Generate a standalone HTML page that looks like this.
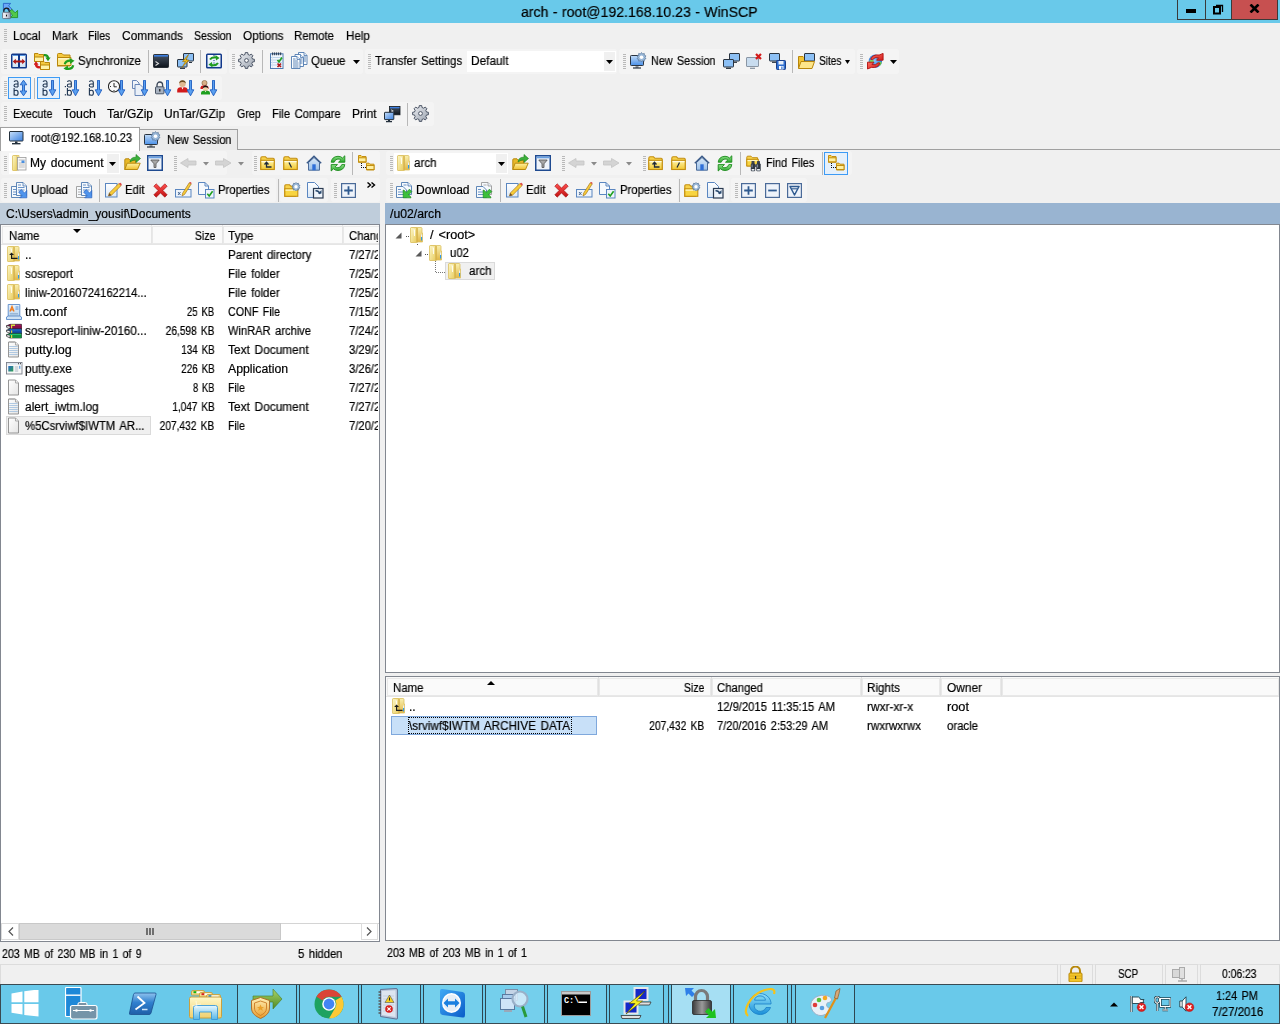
<!DOCTYPE html><html><head><meta charset="utf-8"><style>
html,body{margin:0;padding:0;width:1280px;height:1024px;overflow:hidden;background:#f0f0f0;position:relative}
.a{position:absolute;display:block}
.t{will-change:transform;-webkit-text-stroke:0.2px #000;position:absolute;white-space:pre;font-family:"Liberation Sans",sans-serif;color:#000}
</style></head><body>
<div class="a" style="left:0px;top:0px;width:1280px;height:23px;background:#69c9ea;"></div>
<svg class="a" style="left:0px;top:0px;" width="24" height="23" viewBox="0 0 24 23"><defs><linearGradient id="apg" x1="0" y1="0" x2="1" y2="0"><stop offset="0" stop-color="#ffffff"/><stop offset="0.6" stop-color="#c8ccd8"/><stop offset="1" stop-color="#8a90a8"/></linearGradient></defs><path d="M3.4 3.4H10.6L8.6 5.8L12.2 9.4L9.8 11.8L6.2 8.2L3.4 10.8Z" fill="#6aa8f8" stroke="#1f5ac0" stroke-width="0.8" stroke-linejoin="round"/><path d="M17.6 17.6H10.4L12.6 15.2L9.2 11.8L11.8 9.4L15.2 12.8L17.6 10.4Z" fill="#52c84a" stroke="#1a8a1a" stroke-width="0.8" stroke-linejoin="round"/><path d="M3.8 12.2V11A2.7 2.9 0 0 1 9.2 11V12.2" fill="none" stroke="#1a1a1a" stroke-width="1.2"/><rect x="2.6" y="12.3" width="8" height="6.3" rx="0.8" fill="url(#apg)" stroke="#5a5f70" stroke-width="0.8"/><rect x="6" y="14.6" width="1" height="2" rx="0.5" fill="#111"/></svg>
<div class="t" style="left:521.40px;top:4.00px;transform-origin:0 0;font-size:15px;line-height:15px;transform:scaleX(0.9407);word-spacing:0.50px;">arch - root@192.168.10.23 - WinSCP</div>
<div class="a" style="left:1177px;top:0px;width:29px;height:20px;background:#69c9ea;box-sizing:border-box;border:1px solid #3a3a3a;border-top:none;"></div>
<div class="a" style="left:1205px;top:0px;width:27px;height:20px;background:#69c9ea;box-sizing:border-box;border:1px solid #3a3a3a;border-top:none;"></div>
<div class="a" style="left:1231px;top:0px;width:47px;height:20px;background:#c75050;box-sizing:border-box;border:1px solid #3a3a3a;border-top:none;"></div>
<div class="a" style="left:1186px;top:9px;width:10px;height:4px;background:#000;"></div>
<svg class="a" style="left:1212px;top:3px;" width="12" height="12" viewBox="0 0 12 12"><rect x="2" y="4" width="6" height="6.5" fill="none" stroke="#000" stroke-width="2"/><path d="M4 2.5H10.5V9" fill="none" stroke="#000" stroke-width="1.3"/></svg>
<svg class="a" style="left:1249px;top:4px;" width="11" height="9" viewBox="0 0 11 9"><path d="M1.5 0.5L9.5 8.5M9.5 0.5L1.5 8.5" stroke="#000" stroke-width="2.6"/></svg>
<div class="a" style="left:4px;top:29px;width:3px;height:14px;background:repeating-linear-gradient(#b9b9b9 0 1px,transparent 1px 2px)"></div>
<div class="t" style="left:13.30px;top:30.00px;transform-origin:0 0;font-size:12px;line-height:12px;transform:scaleX(0.9658);">Local</div>
<div class="t" style="left:51.60px;top:30.00px;transform-origin:0 0;font-size:12px;line-height:12px;transform:scaleX(0.9625);">Mark</div>
<div class="t" style="left:88.30px;top:30.00px;transform-origin:0 0;font-size:12px;line-height:12px;transform:scaleX(0.8807);">Files</div>
<div class="t" style="left:121.60px;top:30.00px;transform-origin:0 0;font-size:12px;line-height:12px;transform:scaleX(0.9938);">Commands</div>
<div class="t" style="left:193.75px;top:30.00px;transform-origin:0 0;font-size:12px;line-height:12px;transform:scaleX(0.8778);">Session</div>
<div class="t" style="left:242.80px;top:30.00px;transform-origin:0 0;font-size:12px;line-height:12px;transform:scaleX(0.9821);">Options</div>
<div class="t" style="left:294.40px;top:30.00px;transform-origin:0 0;font-size:12px;line-height:12px;transform:scaleX(0.9524);">Remote</div>
<div class="t" style="left:345.60px;top:30.00px;transform-origin:0 0;font-size:12px;line-height:12px;transform:scaleX(0.9651);">Help</div>
<div class="a" style="left:1px;top:49px;width:226px;height:25px;background:#f4f4f4;border-radius:3px;"></div>
<div class="a" style="left:229px;top:49px;width:134px;height:25px;background:#f4f4f4;border-radius:3px;"></div>
<div class="a" style="left:365px;top:49px;width:252px;height:25px;background:#f4f4f4;border-radius:3px;"></div>
<div class="a" style="left:619px;top:49px;width:236px;height:25px;background:#f4f4f4;border-radius:3px;"></div>
<div class="a" style="left:857px;top:49px;width:42px;height:25px;background:#f4f4f4;border-radius:3px;"></div>
<div class="a" style="left:1px;top:76px;width:221px;height:24px;background:#f4f4f4;border-radius:3px;"></div>
<div class="a" style="left:1px;top:102px;width:433px;height:24px;background:#f4f4f4;border-radius:3px;"></div>
<div class="a" style="left:4px;top:54px;width:3px;height:15px;background:repeating-linear-gradient(#b9b9b9 0 1px,transparent 1px 2px)"></div>
<svg class="a" style="left:11px;top:53px;" width="16" height="16" viewBox="0 0 16 16"><defs><linearGradient id="cmpg" x1="0" y1="0" x2="0" y2="1"><stop offset="0" stop-color="#ffffff"/><stop offset="1" stop-color="#cfe3f5"/></linearGradient></defs><rect x="0.75" y="1.25" width="14.5" height="13.5" rx="0.8" fill="url(#cmpg)" stroke="#12388a" stroke-width="1.5"/><rect x="1.5" y="2" width="13" height="1" fill="#5a9ae0"/><rect x="7" y="1" width="2" height="14" fill="#12388a"/><path d="M1.8 8.5L4.8 5.8V7.6H11.2V5.8L14.2 8.5L11.2 11.2V9.4H4.8V11.2Z" fill="#b01818"/></svg>
<svg class="a" style="left:34px;top:53px;" width="17" height="17" viewBox="0 0 17 17"><path d="M0.5 0.5h3.5l1 1h4.5v7h-9z" fill="#f5c940" stroke="#b8860b" stroke-width="1"/><path d="M0.5 4.0h9v4.5h-9z" fill="#fff3a8" stroke="#b8860b" stroke-width="1"/><path d="M6.5 8.5h3.5l1 1h4.5v7h-9z" fill="#f5c940" stroke="#b8860b" stroke-width="1"/><path d="M6.5 12.0h9v4.5h-9z" fill="#fff3a8" stroke="#b8860b" stroke-width="1"/><path d="M9.8 2.2Q13.6 1.6 14.2 5.2" fill="none" stroke="#1f9a1f" stroke-width="2.2"/><path d="M11.4 4.6H16.6L14 8.2Z" fill="#1f9a1f"/><path d="M6.2 14.2Q2.4 14.8 1.8 11.2" fill="none" stroke="#d41a1a" stroke-width="2.2"/><path d="M4.6 11.8H-0.6L2 8.2Z" fill="#d41a1a"/></svg>
<svg class="a" style="left:57px;top:53px;" width="18" height="17" viewBox="0 0 18 17"><path d="M0.5 1.5Q0.5 0.5 1.5 0.5h3.5l1.5 1.5h6.5v11h-13z" fill="#f5c940" stroke="#b8860b" stroke-width="1"/><path d="M0.5 4.5h13.5v8h-13.5z" fill="#fde88a" stroke="#b8860b" stroke-width="1"/><rect x="1.2" y="5.2" width="12" height="1.3" fill="#fff8d0"/><path d="M7.8 11.2Q8.6 7.2 13.8 7.6" fill="none" stroke="#1fa01f" stroke-width="2.2"/><path d="M12.5 5L17.5 7.8L13.2 11Z" fill="#1fa01f"/><path d="M16.2 12.2Q15.4 16.2 10.2 15.8" fill="none" stroke="#1fa01f" stroke-width="2.2"/><path d="M11.5 18.4L6.5 15.6L10.8 12.4Z" fill="#1fa01f"/></svg>
<div class="t" style="left:77.50px;top:55.00px;transform-origin:0 0;font-size:12px;line-height:12px;transform:scaleX(0.9537);">Synchronize</div>
<div class="a" style="left:148px;top:50px;width:1px;height:23px;background:#b8b8b8;"></div>
<svg class="a" style="left:153px;top:53px;" width="17" height="16" viewBox="0 0 17 16"><defs><linearGradient id="trg" x1="0" y1="0" x2="0" y2="1"><stop offset="0" stop-color="#4a5666"/><stop offset="1" stop-color="#0e141c"/></linearGradient></defs><rect x="0.5" y="1.5" width="15" height="13" rx="0.8" fill="url(#trg)" stroke="#111820" stroke-width="0.8"/><rect x="1" y="2" width="14" height="1.6" fill="#3c7ee0"/><path d="M2.5 8.5L5.5 10.5L2.5 12.5" fill="none" stroke="#d8d8d8" stroke-width="1.1"/></svg>
<svg class="a" style="left:177px;top:53px;" width="17" height="16" viewBox="0 0 17 16"><rect x="6.5" y="0.5" width="10" height="7.5" rx="0.5" fill="#8cc0f5" stroke="#2a3440"/><rect x="0.5" y="6.5" width="9.5" height="7.5" rx="0.5" fill="#8cc0f5" stroke="#2a3440"/><path d="M3 15.3H8" stroke="#2a3440" stroke-width="1.3"/><path d="M12 9.5H15" stroke="#2a3440" stroke-width="1"/><path d="M11.5 1.5L5.5 8.5H8.5L5 14.5L12 7H9Z" fill="#f2c21a" stroke="#9a6a00" stroke-width="0.6"/></svg>
<div class="a" style="left:200px;top:50px;width:1px;height:23px;background:#b8b8b8;"></div>
<svg class="a" style="left:206px;top:53px;" width="16" height="16" viewBox="0 0 16 16"><defs><linearGradient id="rfg" x1="0" y1="0" x2="0" y2="1"><stop offset="0" stop-color="#ffffff"/><stop offset="1" stop-color="#d6e6f6"/></linearGradient></defs><rect x="0.75" y="1.25" width="14.5" height="13.5" rx="0.8" fill="url(#rfg)" stroke="#12388a" stroke-width="1.5"/><path d="M8 2V14" stroke="#12388a" stroke-width="1" stroke-dasharray="1 1.5"/><path d="M4 6.5Q6 3.5 10.5 4.5" fill="none" stroke="#1f9a1f" stroke-width="2"/><path d="M9.5 2L13.5 5L10 7.5Z" fill="#1f9a1f"/><path d="M12 10Q10 13 5.5 12" fill="none" stroke="#1f9a1f" stroke-width="2"/><path d="M6.5 14.5L2.5 11.5L6 9Z" fill="#1f9a1f"/></svg>
<div class="a" style="left:232px;top:54px;width:3px;height:15px;background:repeating-linear-gradient(#b9b9b9 0 1px,transparent 1px 2px)"></div>
<svg class="a" style="left:238px;top:52px;" width="17" height="17" viewBox="0 0 17 17"><defs><linearGradient id="grg" x1="0" y1="0" x2="1" y2="1"><stop offset="0" stop-color="#eef0f4"/><stop offset="1" stop-color="#9aa2ae"/></linearGradient></defs><path d="M14.53 7.05 L16.40 7.25 L16.40 9.75 L14.53 9.95 L13.79 11.74 L14.97 13.20 L13.20 14.97 L11.74 13.79 L9.95 14.53 L9.75 16.40 L7.25 16.40 L7.05 14.53 L5.26 13.79 L3.80 14.97 L2.03 13.20 L3.21 11.74 L2.47 9.95 L0.60 9.75 L0.60 7.25 L2.47 7.05 L3.21 5.26 L2.03 3.80 L3.80 2.03 L5.26 3.21 L7.05 2.47 L7.25 0.60 L9.75 0.60 L9.95 2.47 L11.74 3.21 L13.20 2.03 L14.97 3.80 L13.79 5.26Z" fill="url(#grg)" stroke="#4f5868" stroke-width="1" stroke-linejoin="round"/><circle cx="8.5" cy="8.5" r="1.9" fill="#fafafa" stroke="#4f5868" stroke-width="1"/></svg>
<div class="a" style="left:262px;top:50px;width:1px;height:23px;background:#b8b8b8;"></div>
<svg class="a" style="left:270px;top:52px;" width="14" height="17" viewBox="0 0 14 17"><rect x="0.5" y="1.8" width="12.5" height="14.7" fill="#f2f7fd" stroke="#4f7ab0"/><path d="M1 5.5H12.5M1 8H12.5M1 10.5H12.5M1 13H12.5" stroke="#b9d0ea" stroke-width="0.9"/><path d="M2.5 2V16" stroke="#d8e4f2" stroke-width="0.8"/><rect x="2.2" y="0.3" width="1" height="3" rx="0.5" fill="#1a2a40"/><rect x="4.2" y="0.3" width="1" height="3" rx="0.5" fill="#1a2a40"/><rect x="6.2" y="0.3" width="1" height="3" rx="0.5" fill="#1a2a40"/><rect x="8.2" y="0.3" width="1" height="3" rx="0.5" fill="#1a2a40"/><rect x="10.2" y="0.3" width="1" height="3" rx="0.5" fill="#1a2a40"/><path d="M7.5 8L9 9.8L12 5.5" fill="none" stroke="#22a022" stroke-width="1.7"/><path d="M7.5 11.5L11 15M11 11.5L7.5 15" stroke="#b01818" stroke-width="1.7"/></svg>
<svg class="a" style="left:291px;top:52px;" width="17" height="17" viewBox="0 0 17 17"><path d="M7.5 0.5h5.5l3 3v9h-8.5z" fill="#fbfdff" stroke="#4f7ab0" stroke-width="0.9"/><path d="M13 0.5v3h3" fill="#e4ecf6" stroke="#4f7ab0" stroke-width="0.8"/><path d="M11 5H15 M11 7H15 M11 9H15" stroke="#4f7ab0" stroke-width="0.9"/><path d="M4 2.5h5.5l3 3v9h-8.5z" fill="#fbfdff" stroke="#4f7ab0" stroke-width="0.9"/><path d="M9.5 2.5v3h3" fill="#e4ecf6" stroke="#4f7ab0" stroke-width="0.8"/><path d="M7.5 7H11.5 M7.5 9H11.5 M7.5 11H11.5" stroke="#4f7ab0" stroke-width="0.9"/><path d="M0.5 4.5h5.5l3 3v9h-8.5z" fill="#fbfdff" stroke="#4f7ab0" stroke-width="0.9"/><path d="M6 4.5v3h3" fill="#e4ecf6" stroke="#4f7ab0" stroke-width="0.8"/><path d="M2 9H7 M2 11H7.5 M2 13H7.5" stroke="#4f7ab0" stroke-width="0.9"/><path d="M2 15H7.5" stroke="#4f7ab0" stroke-width="0.9"/><path d="M2 7H4.5" stroke="#4f7ab0" stroke-width="0.9"/></svg>
<div class="t" style="left:311.00px;top:55.00px;transform-origin:0 0;font-size:12px;line-height:12px;transform:scaleX(0.9567);">Queue</div>
<svg class="a" style="left:353px;top:60px;" width="7" height="4" viewBox="0 0 7 4"><path d="M0 0H7L3.5 4Z" fill="#000"/></svg>
<div class="a" style="left:368px;top:54px;width:3px;height:15px;background:repeating-linear-gradient(#b9b9b9 0 1px,transparent 1px 2px)"></div>
<div class="t" style="left:375.00px;top:55.00px;transform-origin:0 0;font-size:12px;line-height:12px;transform:scaleX(0.9416);word-spacing:1.50px;">Transfer Settings</div>
<div class="a" style="left:467px;top:51px;width:149px;height:21px;background:#fff;"></div>
<div class="a" style="left:604px;top:52px;width:11px;height:19px;background:#f0f0f0;"></div>
<svg class="a" style="left:606px;top:60px;" width="7" height="4" viewBox="0 0 7 4"><path d="M0 0H7L3.5 4Z" fill="#000"/></svg>
<div class="t" style="left:470.50px;top:54.50px;transform-origin:0 0;font-size:12px;line-height:12px;transform:scaleX(0.9858);">Default</div>
<div class="a" style="left:623px;top:54px;width:3px;height:15px;background:repeating-linear-gradient(#b9b9b9 0 1px,transparent 1px 2px)"></div>
<svg class="a" style="left:630px;top:52px;" width="17" height="17" viewBox="0 0 17 17"><defs><linearGradient id="nsg" x1="0" y1="0" x2="0" y2="1"><stop offset="0" stop-color="#c2dcf8"/><stop offset="1" stop-color="#4a90e8"/></linearGradient></defs><rect x="0.5" y="3.5" width="13" height="10" rx="0.8" fill="url(#nsg)" stroke="#2a3440"/><path d="M5.5 14.5H8.5V15.5H5.5Z" fill="#2a3440"/><path d="M3 16H11" stroke="#2a3440" stroke-width="1.2"/><path d="M11.5 0.5L12.6 1.9L14.3 1.4L14.4 3.2L16 3.9L15 5.3L16 6.7L14.4 7.4L14.3 9.2L12.6 8.7L11.5 10.1L10.4 8.7L8.7 9.2L8.6 7.4L7 6.7L8 5.3L7 3.9L8.6 3.2L8.7 1.4L10.4 1.9Z" fill="#9ab8d8" stroke="#4a6a90" stroke-width="0.6"/><circle cx="11.5" cy="5.3" r="1.8" fill="#fff"/></svg>
<div class="t" style="left:650.50px;top:55.00px;transform-origin:0 0;font-size:12px;line-height:12px;transform:scaleX(0.9018);word-spacing:1.50px;">New Session</div>
<svg class="a" style="left:723px;top:53px;" width="17" height="16" viewBox="0 0 17 16"><rect x="6.5" y="0.5" width="10" height="7.5" rx="0.5" fill="#8cc0f5" stroke="#2a3440"/><path d="M10 9.3H14" stroke="#2a3440" stroke-width="1.2"/><rect x="0.5" y="6.5" width="10" height="7.5" rx="0.5" fill="#8cc0f5" stroke="#2a3440"/><path d="M3 15.3H8" stroke="#2a3440" stroke-width="1.3"/></svg>
<svg class="a" style="left:746px;top:53px;" width="17" height="16" viewBox="0 0 17 16"><rect x="0.5" y="4.5" width="12" height="9" rx="0.5" fill="#c8dcef" stroke="#8a96a4"/><path d="M4 15.3H9" stroke="#8a96a4" stroke-width="1.3"/><path d="M10 1L15 6M15 1L10 6" stroke="#d41a1a" stroke-width="2.2"/></svg>
<svg class="a" style="left:769px;top:53px;" width="17" height="17" viewBox="0 0 17 17"><rect x="0.5" y="0.5" width="10" height="7.5" rx="0.5" fill="#8cc0f5" stroke="#2a3440"/><path d="M3 9.3H8" stroke="#2a3440" stroke-width="1.2"/><rect x="7.5" y="7.5" width="9" height="9" rx="0.8" fill="#2f6fd0" stroke="#1a3f8a"/><rect x="9.5" y="8" width="5" height="3.5" fill="#e8f0fa"/><rect x="10" y="13" width="4.5" height="3.5" fill="#fff"/><rect x="12.3" y="13.5" width="1.2" height="2.5" fill="#2f6fd0"/></svg>
<div class="a" style="left:792px;top:50px;width:1px;height:23px;background:#b8b8b8;"></div>
<svg class="a" style="left:798px;top:53px;" width="17" height="16" viewBox="0 0 17 16"><path d="M0.5 3.5h4.5l1 1h6v10.5h-11.5z" fill="#f0c232" stroke="#b8860b"/><rect x="6.5" y="0.5" width="10" height="7.5" rx="0.5" fill="#8cc0f5" stroke="#2a3440"/><path d="M3 8.5H16.5L14 15.5H0.5Z" fill="#fde58a" stroke="#b8860b"/></svg>
<div class="t" style="left:818.75px;top:55.00px;transform-origin:0 0;font-size:12px;line-height:12px;transform:scaleX(0.8352);">Sites</div>
<svg class="a" style="left:845px;top:60px;" width="5" height="4" viewBox="0 0 5 4"><path d="M0 0H5L2.5 4Z" fill="#000"/></svg>
<div class="a" style="left:860px;top:54px;width:3px;height:15px;background:repeating-linear-gradient(#b9b9b9 0 1px,transparent 1px 2px)"></div>
<svg class="a" style="left:866.5px;top:52.5px;" width="17" height="17" viewBox="0 0 17 17"><defs><radialGradient id="glb" cx="0.45" cy="0.45" r="0.6"><stop offset="0" stop-color="#8ac8ff"/><stop offset="1" stop-color="#1a6ad0"/></radialGradient><linearGradient id="rda" x1="0" y1="0" x2="1" y2="1"><stop offset="0" stop-color="#ff6a5a"/><stop offset="1" stop-color="#d02020"/></linearGradient></defs><circle cx="8.3" cy="8.2" r="6.6" fill="url(#glb)"/><path d="M2.2 8.5Q3.5 5.8 6.5 7Q7 8.8 5.5 10Q3.2 10.5 2.2 8.5Z" fill="#7ad85a"/><path d="M10 10.5Q12.5 8 14.8 9.2Q14.3 12 12 13Q10 12.5 10 10.5Z" fill="#6ad050"/><path d="M3.6 6.2Q5.8 1.2 12.2 2.0L16.1 0.4L16.1 7.2L9.6 7.2L11.6 4.8Q7.8 3.6 5.6 6.6Z" fill="url(#rda)" stroke="#b01010" stroke-width="0.9" stroke-linejoin="round"/><path d="M13.0 10.2Q10.8 15.2 4.4 14.4L0.5 16.0L0.5 9.2L7.0 9.2L5.0 11.6Q8.8 12.8 11.0 9.8Z" fill="url(#rda)" stroke="#b01010" stroke-width="0.9" stroke-linejoin="round"/></svg>
<svg class="a" style="left:889.5px;top:60px;" width="7" height="4" viewBox="0 0 7 4"><path d="M0 0H7L3.5 4Z" fill="#000"/></svg>
<div class="a" style="left:4px;top:81px;width:3px;height:15px;background:repeating-linear-gradient(#b9b9b9 0 1px,transparent 1px 2px)"></div>
<div class="a" style="left:8px;top:77px;width:23px;height:22px;background:#e5f0fb;box-sizing:border-box;border:1px solid #3d9bf5;"></div>
<svg class="a" style="left:12px;top:80px;" width="18" height="17" viewBox="0 0 18 17"><path d="M2.0 1.8Q2.7 0.8 4.2 0.8Q6.0 0.8 6.0 2.6V7.1 M6.0 4.0H3.7Q2.0 4.0 2.0 5.5Q2.0 7.0 3.7 7.0H6.0 M2.1 8.0V15.5M2.1 11.3Q2.7 10.3 4.1 10.3Q6.1 10.3 6.1 12.9Q6.1 15.3 4.1 15.3Q2.7 15.3 2.1 14.3" fill="none" stroke="#1e3450" stroke-width="1.1"/><path d="M11.5 0.2L14.8 4.8H12.5V11H14.8L11.5 15.8L8.2 11H10.5V4.8H8.2Z" fill="#5aa0f0" stroke="#1e5cc0" stroke-width="0.9" stroke-linejoin="round"/></svg>
<div class="a" style="left:34px;top:78px;width:1px;height:21px;background:#b8b8b8;"></div>
<div class="a" style="left:37px;top:77px;width:23px;height:22px;background:#e5f0fb;box-sizing:border-box;border:1px solid #3d9bf5;"></div>
<svg class="a" style="left:41px;top:80px;" width="18" height="17" viewBox="0 0 18 17"><path d="M2.0 1.8Q2.7 0.8 4.2 0.8Q6.0 0.8 6.0 2.6V7.1 M6.0 4.0H3.7Q2.0 4.0 2.0 5.5Q2.0 7.0 3.7 7.0H6.0 M2.1 8.0V15.5M2.1 11.3Q2.7 10.3 4.1 10.3Q6.1 10.3 6.1 12.9Q6.1 15.3 4.1 15.3Q2.7 15.3 2.1 14.3" fill="none" stroke="#1e3450" stroke-width="1.1"/><path d="M10.5 0.3H12.5V9.8H14.8L11.5 15.8L8.2 9.8H10.5Z" fill="#5aa0f0" stroke="#1e5cc0" stroke-width="0.9" stroke-linejoin="round"/></svg>
<svg class="a" style="left:64px;top:80px;" width="18" height="17" viewBox="0 0 18 17"><path d="M3.3 1.8Q4.0 0.8 5.5 0.8Q7.3 0.8 7.3 2.6V7.1 M7.3 4.0H5.0Q3.3 4.0 3.3 5.5Q3.3 7.0 5.0 7.0H7.3 M3.4 8.0V15.5M3.4 11.3Q4.0 10.3 5.4 10.3Q7.4 10.3 7.4 12.9Q7.4 15.3 5.4 15.3Q4.0 15.3 3.4 14.3" fill="none" stroke="#1e3450" stroke-width="1.1"/><rect x="0.8" y="6.0" width="1.2" height="1.2" fill="#1e3450"/><rect x="0.8" y="14.2" width="1.2" height="1.2" fill="#1e3450"/><path d="M10.5 0.3H12.5V9.8H14.8L11.5 15.8L8.2 9.8H10.5Z" fill="#5aa0f0" stroke="#1e5cc0" stroke-width="0.9" stroke-linejoin="round"/></svg>
<svg class="a" style="left:87px;top:80px;" width="18" height="17" viewBox="0 0 18 17"><path d="M2.3 1.8Q3.0 0.8 4.5 0.8Q6.3 0.8 6.3 2.6V7.1 M6.3 4.0H4.0Q2.3 4.0 2.3 5.5Q2.3 7.0 4.0 7.0H6.3 M2.4 8.0V15.5M2.4 11.3Q3.0 10.3 4.4 10.3Q6.4 10.3 6.4 12.9Q6.4 15.3 4.4 15.3Q3.0 15.3 2.4 14.3" fill="none" stroke="#1e3450" stroke-width="1.1"/><path d="M10.5 0.3H12.5V9.8H14.8L11.5 15.8L8.2 9.8H10.5Z" fill="#5aa0f0" stroke="#1e5cc0" stroke-width="0.9" stroke-linejoin="round"/></svg>
<svg class="a" style="left:108px;top:80px;" width="18" height="17" viewBox="0 0 18 17"><circle cx="6" cy="6.4" r="5.6" fill="#fafafa" stroke="#2a2a2a" stroke-width="1.1"/><path d="M6 3V6.8H8.8" fill="none" stroke="#2a2a2a" stroke-width="1"/><rect x="2" y="6" width="1" height="1" fill="#333"/><rect x="5.5" y="10" width="1" height="1" fill="#333"/><path d="M12.5 0.3H14.5V9.8H16.8L13.5 15.8L10.2 9.8H12.5Z" fill="#5aa0f0" stroke="#1e5cc0" stroke-width="0.9" stroke-linejoin="round"/></svg>
<svg class="a" style="left:131.5px;top:80px;" width="18" height="17" viewBox="0 0 18 17"><path d="M0.5 0.5H4.5L7 3V8.5H0.5Z" fill="#f0f4fa" stroke="#5a7ab0" stroke-width="0.9"/><path d="M3 4.5H8L11 7.5V15.5H3Z" fill="#eaf0f8" stroke="#5a7ab0" stroke-width="0.9"/><path d="M11.5 0.3H13.5V9.8H15.8L12.5 15.8L9.2 9.8H11.5Z" fill="#5aa0f0" stroke="#1e5cc0" stroke-width="0.9" stroke-linejoin="round"/></svg>
<svg class="a" style="left:154px;top:80px;" width="18" height="17" viewBox="0 0 18 17"><path d="M3 7V5A2.8 3 0 0 1 8.6 5V7" fill="none" stroke="#3a4658" stroke-width="1.3"/><rect x="1.5" y="6.8" width="8.5" height="7" rx="0.8" fill="#a8b2c0" stroke="#3a4658" stroke-width="0.9"/><rect x="5.2" y="9" width="1.2" height="2.5" fill="#111"/><path d="M12.5 0.3H14.5V9.8H16.8L13.5 15.8L10.2 9.8H12.5Z" fill="#5aa0f0" stroke="#1e5cc0" stroke-width="0.9" stroke-linejoin="round"/></svg>
<svg class="a" style="left:177px;top:80px;" width="18" height="17" viewBox="0 0 18 17"><circle cx="5.5" cy="3.7" r="3.2" fill="#e0b890"/><path d="M2.2 3.4Q2.5 0.2 5.5 0.3Q8.5 0.2 8.8 3.4Q7 1.8 5.5 2Q4 1.8 2.2 3.4Z" fill="#6b4a20"/><path d="M0.2 12.6V10Q0.5 7.4 3.5 7.2H7.5Q10.5 7.4 10.8 10V12.6Z" fill="#d21a1a"/><path d="M4.5 7.3L5.5 9.5L6.5 7.3Z" fill="#fff"/><path d="M12.5 0.3H14.5V9.8H16.8L13.5 15.8L10.2 9.8H12.5Z" fill="#5aa0f0" stroke="#1e5cc0" stroke-width="0.9" stroke-linejoin="round"/></svg>
<svg class="a" style="left:200px;top:80px;" width="18" height="17" viewBox="0 0 18 17"><circle cx="4.5" cy="3" r="2.6" fill="#d8b088" stroke="#6b4a20" stroke-width="0.5"/><path d="M0.5 9V7.5Q0.8 5.5 3 5.5H6Q8.5 5.5 8.5 7.5V9Z" fill="#d21a1a"/><circle cx="5.5" cy="8.5" r="2.6" fill="#f0d0a8"/><path d="M2.8 8.3Q3 5.5 5.5 5.6Q8 5.5 8.2 8.3Q7 7 5.5 7.2Q4 7 2.8 8.3Z" fill="#111"/><path d="M1 14.5V12.5Q1.3 10.8 3.5 10.8H7.5Q9.8 10.8 10 12.5V14.5Z" fill="#1ea01e"/><path d="M4.8 10.9L5.5 12.3L6.2 10.9Z" fill="#fff"/><path d="M12.5 0.3H14.5V9.8H16.8L13.5 15.8L10.2 9.8H12.5Z" fill="#5aa0f0" stroke="#1e5cc0" stroke-width="0.9" stroke-linejoin="round"/></svg>
<div class="a" style="left:4px;top:106px;width:3px;height:15px;background:repeating-linear-gradient(#b9b9b9 0 1px,transparent 1px 2px)"></div>
<div class="t" style="left:13.00px;top:107.50px;transform-origin:0 0;font-size:12px;line-height:12px;transform:scaleX(0.9106);">Execute</div>
<div class="t" style="left:63.00px;top:107.50px;transform-origin:0 0;font-size:12px;line-height:12px;transform:scaleX(1.0300);">Touch</div>
<div class="t" style="left:107.00px;top:107.50px;transform-origin:0 0;font-size:12px;line-height:12px;">Tar/GZip</div>
<div class="t" style="left:164.00px;top:107.50px;transform-origin:0 0;font-size:12px;line-height:12px;transform:scaleX(0.9948);">UnTar/GZip</div>
<div class="t" style="left:236.70px;top:107.50px;transform-origin:0 0;font-size:12px;line-height:12px;transform:scaleX(0.8876);">Grep</div>
<div class="t" style="left:271.60px;top:107.50px;transform-origin:0 0;font-size:12px;line-height:12px;transform:scaleX(0.9347);word-spacing:1.50px;">File Compare</div>
<div class="t" style="left:351.50px;top:107.50px;transform-origin:0 0;font-size:12px;line-height:12px;transform:scaleX(0.9935);">Print</div>
<svg class="a" style="left:384px;top:106px;" width="17" height="17" viewBox="0 0 17 17"><rect x="5.5" y="0.5" width="10.5" height="8.3" fill="url(#trg)" stroke="#111820" stroke-width="0.8"/><rect x="6" y="1" width="9.5" height="1.3" fill="#3c7ee0"/><path d="M7 3.8L9.3 5L7 6.2" fill="none" stroke="#ddd" stroke-width="0.9"/><rect x="0.5" y="6.3" width="9.3" height="7.3" rx="0.5" fill="url(#mng)" stroke="#24303c"/><rect x="4" y="14" width="2" height="1" fill="#24303c"/><path d="M2 15.6H8" stroke="#24303c" stroke-width="1.3"/></svg>
<div class="a" style="left:407px;top:103px;width:1px;height:23px;background:#b8b8b8;"></div>
<svg class="a" style="left:412px;top:105px;" width="17" height="17" viewBox="0 0 17 17"><defs><linearGradient id="grg" x1="0" y1="0" x2="1" y2="1"><stop offset="0" stop-color="#eef0f4"/><stop offset="1" stop-color="#9aa2ae"/></linearGradient></defs><path d="M14.53 7.05 L16.40 7.25 L16.40 9.75 L14.53 9.95 L13.79 11.74 L14.97 13.20 L13.20 14.97 L11.74 13.79 L9.95 14.53 L9.75 16.40 L7.25 16.40 L7.05 14.53 L5.26 13.79 L3.80 14.97 L2.03 13.20 L3.21 11.74 L2.47 9.95 L0.60 9.75 L0.60 7.25 L2.47 7.05 L3.21 5.26 L2.03 3.80 L3.80 2.03 L5.26 3.21 L7.05 2.47 L7.25 0.60 L9.75 0.60 L9.95 2.47 L11.74 3.21 L13.20 2.03 L14.97 3.80 L13.79 5.26Z" fill="url(#grg)" stroke="#4f5868" stroke-width="1" stroke-linejoin="round"/><circle cx="8.5" cy="8.5" r="1.9" fill="#fafafa" stroke="#4f5868" stroke-width="1"/></svg>
<div class="a" style="left:0px;top:149px;width:1280px;height:1px;background:#a0a0a0;"></div>
<div class="a" style="left:0px;top:127px;width:140px;height:24px;background:#fff;box-sizing:border-box;border:1px solid #a0a0a0;border-bottom:none;"></div>
<div class="a" style="left:139px;top:129px;width:99px;height:21px;background:#ebebeb;box-sizing:border-box;border:1px solid #a0a0a0;border-bottom:none;"></div>
<svg class="a" style="left:9px;top:131px;" width="15" height="14" viewBox="0 0 15 14"><defs><linearGradient id="mng" x1="0" y1="0" x2="1" y2="1"><stop offset="0" stop-color="#c8e0fa"/><stop offset="1" stop-color="#3a80e0"/></linearGradient></defs><rect x="0.5" y="0.5" width="13.5" height="9.5" rx="0.5" fill="url(#mng)" stroke="#24303c"/><rect x="6" y="10.5" width="2.5" height="1.5" fill="#24303c"/><path d="M3 12.7H11.5" stroke="#24303c" stroke-width="1.4"/></svg>
<div class="t" style="left:30.50px;top:132.30px;transform-origin:0 0;font-size:12px;line-height:12px;transform:scaleX(0.9214);">root@192.168.10.23</div>
<svg class="a" style="left:143.5px;top:130.5px;" width="17" height="17" viewBox="0 0 17 17"><defs><linearGradient id="nsg" x1="0" y1="0" x2="0" y2="1"><stop offset="0" stop-color="#c2dcf8"/><stop offset="1" stop-color="#4a90e8"/></linearGradient></defs><rect x="0.5" y="3.5" width="13" height="10" rx="0.8" fill="url(#nsg)" stroke="#2a3440"/><path d="M5.5 14.5H8.5V15.5H5.5Z" fill="#2a3440"/><path d="M3 16H11" stroke="#2a3440" stroke-width="1.2"/><path d="M11.5 0.5L12.6 1.9L14.3 1.4L14.4 3.2L16 3.9L15 5.3L16 6.7L14.4 7.4L14.3 9.2L12.6 8.7L11.5 10.1L10.4 8.7L8.7 9.2L8.6 7.4L7 6.7L8 5.3L7 3.9L8.6 3.2L8.7 1.4L10.4 1.9Z" fill="#9ab8d8" stroke="#4a6a90" stroke-width="0.6"/><circle cx="11.5" cy="5.3" r="1.8" fill="#fff"/></svg>
<div class="t" style="left:166.60px;top:134.00px;transform-origin:0 0;font-size:12px;line-height:12px;transform:scaleX(0.9004);word-spacing:1.50px;">New Session</div>
<div class="a" style="left:1px;top:151px;width:226px;height:24px;background:#f4f4f4;border-radius:3px;"></div>
<div class="a" style="left:252px;top:151px;width:128px;height:24px;background:#f4f4f4;border-radius:3px;"></div>
<div class="a" style="left:1px;top:178px;width:275px;height:24px;background:#f4f4f4;border-radius:3px;"></div>
<div class="a" style="left:280px;top:178px;width:48px;height:24px;background:#f4f4f4;border-radius:3px;"></div>
<div class="a" style="left:331px;top:178px;width:49px;height:24px;background:#f4f4f4;border-radius:3px;"></div>
<div class="a" style="left:4px;top:156px;width:3px;height:15px;background:repeating-linear-gradient(#b9b9b9 0 1px,transparent 1px 2px)"></div>
<div class="a" style="left:9px;top:153px;width:111px;height:21px;background:#fff;"></div>
<div class="a" style="left:107px;top:154px;width:12px;height:19px;background:#f0f0f0;"></div>
<svg class="a" style="left:109px;top:162px;" width="7" height="4" viewBox="0 0 7 4"><path d="M0 0H7L3.5 4Z" fill="#000"/></svg>
<svg class="a" style="left:12px;top:155px;" width="15" height="16" viewBox="0 0 15 16"><defs><linearGradient id="w8b" x1="0" y1="0" x2="0" y2="1"><stop offset="0" stop-color="#f9f0b0"/><stop offset="1" stop-color="#e2b848"/></linearGradient><linearGradient id="w8f" x1="0" y1="0" x2="1" y2="1"><stop offset="0" stop-color="#fdf8c8"/><stop offset="1" stop-color="#e8cc60"/></linearGradient></defs><path d="M1.5 0.5H7V15H1.5Z" fill="url(#w8b)" stroke="#dcc060" stroke-width="0.8"/><path d="M0.5 1Q0.5 0.5 1.5 0.5H5V15.5H1Q0.5 15.5 0.5 15Z" fill="url(#w8f)" stroke="#dcc060" stroke-width="0.8"/><rect x="5.5" y="2.5" width="8.5" height="12.5" fill="#f8f8f8" stroke="#9a9a9a" stroke-width="0.8"/><path d="M6.8 5H12.8M6.8 8H12.8M6.8 10H12.8M6.8 12H12.8" stroke="#b0b0b0" stroke-width="0.8"/><rect x="9.5" y="5.5" width="3" height="2.5" fill="#4a90e0"/></svg>
<div class="t" style="left:29.50px;top:156.50px;transform-origin:0 0;font-size:12px;line-height:12px;word-spacing:1.50px;">My document</div>
<svg class="a" style="left:124px;top:154px;" width="17" height="17" viewBox="0 0 17 17"><defs><linearGradient id="opg" x1="0" y1="0" x2="0" y2="1"><stop offset="0" stop-color="#fff2a0"/><stop offset="1" stop-color="#f0c030"/></linearGradient></defs><path d="M0.8 5.8Q0.8 4.8 1.8 4.8H5L6.5 6.3H11.5V15.5H0.8Z" fill="#e8b828" stroke="#b88a10" stroke-width="1"/><path d="M3.2 9.2H16.2L13.5 15.5H0.8Z" fill="url(#opg)" stroke="#b88a10" stroke-width="1" stroke-linejoin="round"/><path d="M6 8Q6.5 3 12 3.2V0.5L16.5 4.5L12 8.5V5.8Q9 5.8 6 8Z" fill="#3cb03c" stroke="#1a801a" stroke-width="0.6" stroke-linejoin="round"/></svg>
<svg class="a" style="left:147px;top:155px;" width="16" height="16" viewBox="0 0 16 16"><rect x="0.75" y="0.75" width="14.5" height="14.5" fill="#eef3fa" stroke="#1f4a90" stroke-width="1.5"/><rect x="1.5" y="1.5" width="13" height="1.8" fill="#6aa0e0"/><path d="M3.8 5H12.2L9 8.8V12.5H7V8.8Z" fill="#a8a8a8" stroke="#505050" stroke-width="0.8" stroke-linejoin="round"/></svg>
<div class="a" style="left:174px;top:156px;width:3px;height:15px;background:repeating-linear-gradient(#b9b9b9 0 1px,transparent 1px 2px)"></div>
<svg class="a" style="left:180px;top:158px;" width="17" height="12" viewBox="0 0 17 12"><path d="M0.5 5L8 0.5V3H16V7H8V9.5Z" fill="#d4d4d4" stroke="#c4c4c4" stroke-width="0.8" stroke-linejoin="round"/></svg>
<svg class="a" style="left:203px;top:162px;" width="6" height="4" viewBox="0 0 6 4"><path d="M0 0H6L3 3.5Z" fill="#8a8a8a"/></svg>
<svg class="a" style="left:215px;top:158px;" width="17" height="12" viewBox="0 0 17 12"><path d="M16 5L8.5 0.5V3H0.5V7H8.5V9.5Z" fill="#d4d4d4" stroke="#c4c4c4" stroke-width="0.8" stroke-linejoin="round"/></svg>
<svg class="a" style="left:238px;top:162px;" width="6" height="4" viewBox="0 0 6 4"><path d="M0 0H6L3 3.5Z" fill="#8a8a8a"/></svg>
<div class="a" style="left:254px;top:156px;width:3px;height:15px;background:repeating-linear-gradient(#b9b9b9 0 1px,transparent 1px 2px)"></div>
<svg class="a" style="left:260px;top:155.5px;" width="15" height="15" viewBox="0 0 15 15"><defs><linearGradient id="yfg" x1="0" y1="0" x2="0" y2="1"><stop offset="0" stop-color="#fff4a8"/><stop offset="1" stop-color="#f2c832"/></linearGradient></defs><path d="M0.8 2.2Q0.8 0.8 2 0.8H5.5L7 2.3H13.2Q14.2 2.3 14.2 3.3V13.2H0.8Z" fill="#f7d24a" stroke="#c48f12" stroke-width="1.1"/><rect x="0.8" y="4.3" width="13.4" height="9.2" fill="url(#yfg)" stroke="#c48f12" stroke-width="1.1"/><rect x="1.5" y="5" width="12" height="1.2" fill="#fffbe0"/><path d="M4.5 8.5L6.5 6.3L8.5 8.5M6.5 6.5V11H11.5" fill="none" stroke="#1e2a3a" stroke-width="1.3"/></svg>
<svg class="a" style="left:283px;top:155.5px;" width="15" height="15" viewBox="0 0 15 15"><defs><linearGradient id="yfg" x1="0" y1="0" x2="0" y2="1"><stop offset="0" stop-color="#fff4a8"/><stop offset="1" stop-color="#f2c832"/></linearGradient></defs><path d="M0.8 2.2Q0.8 0.8 2 0.8H5.5L7 2.3H13.2Q14.2 2.3 14.2 3.3V13.2H0.8Z" fill="#f7d24a" stroke="#c48f12" stroke-width="1.1"/><rect x="0.8" y="4.3" width="13.4" height="9.2" fill="url(#yfg)" stroke="#c48f12" stroke-width="1.1"/><rect x="1.5" y="5" width="12" height="1.2" fill="#fffbe0"/><path d="M6 6.5L8.5 11.5" stroke="#1e2a3a" stroke-width="1.2"/></svg>
<svg class="a" style="left:306px;top:155px;" width="16" height="16" viewBox="0 0 16 16"><defs><linearGradient id="hmg" x1="0" y1="0" x2="0" y2="1"><stop offset="0" stop-color="#d8e8f8"/><stop offset="1" stop-color="#9cc0e8"/></linearGradient></defs><path d="M2.5 7.5V15.2H13.5V7.5L8 2.5Z" fill="url(#hmg)" stroke="#4a6a98" stroke-width="1"/><path d="M0.8 8.3L8 1.3L15.2 8.3" fill="none" stroke="#3a5a88" stroke-width="1.4"/><rect x="6.3" y="9.3" width="3.4" height="5.9" fill="#2f6fd8"/></svg>
<svg class="a" style="left:329.5px;top:154.5px;" width="16" height="17" viewBox="0 0 16 17"><defs><linearGradient id="grf" x1="0" y1="0" x2="0" y2="1"><stop offset="0" stop-color="#8ee08a"/><stop offset="1" stop-color="#2aa82a"/></linearGradient></defs><path d="M1.2 7.2Q2 1.5 8 1.3Q11 1.3 12.5 3L14.8 0.8V7.2H8.5L10.8 5Q9.8 4 8 4Q5 4.2 4.2 7.2Z" fill="url(#grf)" stroke="#1a8a1a" stroke-width="0.9" stroke-linejoin="round"/><path d="M14.8 9.6Q14 15.3 8 15.5Q5 15.5 3.5 13.8L1.2 16V9.6H7.5L5.2 11.8Q6.2 12.8 8 12.8Q11 12.6 11.8 9.6Z" fill="url(#grf)" stroke="#1a8a1a" stroke-width="0.9" stroke-linejoin="round"/></svg>
<div class="a" style="left:352px;top:152px;width:1px;height:23px;background:#b8b8b8;"></div>
<svg class="a" style="left:357.5px;top:155px;" width="17" height="16" viewBox="0 0 17 16"><path d="M0.5 0.5h2.5l1 1h4v5.8h-7.5z" fill="#f7d24a" stroke="#c48f12" stroke-width="1"/><rect x="0.5" y="2.8" width="7.5" height="4" fill="#fff0a0" stroke="#c48f12" stroke-width="1"/><path d="M8.5 8.2h2.5l1 1h4v5.8h-7.5z" fill="#f7d24a" stroke="#c48f12" stroke-width="1"/><rect x="8.5" y="10.5" width="7.5" height="4" fill="#fff0a0" stroke="#c48f12" stroke-width="1"/><rect x="3" y="8" width="1" height="1" fill="#111"/><rect x="3" y="10" width="1" height="1" fill="#111"/><rect x="3" y="12" width="1" height="1" fill="#111"/><rect x="5" y="12" width="1" height="1" fill="#111"/><rect x="7" y="12" width="1" height="1" fill="#111"/></svg>
<div class="a" style="left:4px;top:183px;width:3px;height:15px;background:repeating-linear-gradient(#b9b9b9 0 1px,transparent 1px 2px)"></div>
<svg class="a" style="left:11px;top:182px;" width="17" height="17" viewBox="0 0 17 17"><path d="M0.5 4.5H7L10.5 8V15.5H0.5Z" fill="#f6f9fc" stroke="#4f7ab0" stroke-width="0.9"/><rect x="2" y="7" width="3" height="1" fill="#6a94c8"/><rect x="2" y="9.5" width="6" height="1" fill="#6a94c8"/><rect x="2" y="12" width="6" height="1" fill="#6a94c8"/><path d="M5.5 0.5H12L15.5 4V13.5H5.5Z" fill="#f6f9fc" stroke="#4f7ab0" stroke-width="0.9"/><path d="M12 0.5V4H15.5" fill="#e6eef8" stroke="#4f7ab0" stroke-width="0.8"/><rect x="7" y="2.5" width="3" height="1" fill="#6a94c8"/><rect x="7" y="5" width="6.5" height="1" fill="#6a94c8"/><rect x="7" y="7.5" width="6.5" height="1" fill="#6a94c8"/><path d="M15.8 15.8H8.6L10.9 13.5L7.6 10.2L10.2 7.6L13.5 10.9L15.8 8.6Z" fill="#4f94ec" stroke="#2a62c0" stroke-width="0.7" stroke-linejoin="round"/></svg>
<div class="t" style="left:30.90px;top:184.00px;transform-origin:0 0;font-size:12px;line-height:12px;transform:scaleX(0.9727);">Upload</div>
<svg class="a" style="left:76px;top:182px;" width="17" height="17" viewBox="0 0 17 17"><path d="M0.5 4.5H7L10.5 8V15.5H0.5Z" fill="#f6f9fc" stroke="#9a9a9a" stroke-width="0.9"/><rect x="2" y="7" width="3" height="1" fill="#b0b0b0"/><rect x="2" y="9.5" width="6" height="1" fill="#b0b0b0"/><rect x="2" y="12" width="6" height="1" fill="#b0b0b0"/><path d="M5.5 0.5H12L15.5 4V13.5H5.5Z" fill="#f6f9fc" stroke="#4f7ab0" stroke-width="0.9"/><path d="M12 0.5V4H15.5" fill="#e6eef8" stroke="#4f7ab0" stroke-width="0.8"/><rect x="7" y="2.5" width="3" height="1" fill="#6a94c8"/><rect x="7" y="5" width="6.5" height="1" fill="#6a94c8"/><rect x="7" y="7.5" width="6.5" height="1" fill="#6a94c8"/><path d="M15.8 15.8H8.6L10.9 13.5L7.6 10.2L10.2 7.6L13.5 10.9L15.8 8.6Z" fill="#4f94ec" stroke="#2a62c0" stroke-width="0.7" stroke-linejoin="round"/></svg>
<div class="a" style="left:99px;top:179px;width:1px;height:23px;background:#b8b8b8;"></div>
<svg class="a" style="left:104.5px;top:182px;" width="18" height="16" viewBox="0 0 18 16"><defs><linearGradient id="edg" x1="0" y1="0" x2="0" y2="1"><stop offset="0" stop-color="#ffffff"/><stop offset="1" stop-color="#dce8f5"/></linearGradient></defs><rect x="0.5" y="1.5" width="11.5" height="13.5" fill="url(#edg)" stroke="#5a86c0"/><path d="M3.5 14L4.3 11L13.8 1.5L16 3.7L6.5 13.2Z" fill="#f8cc3a" stroke="#9a6a10" stroke-width="0.6"/><path d="M13.8 1.5L16 3.7L16.8 2.9Q16.8 1.5 15.4 0.8Z" fill="#e04848"/><path d="M3.5 14L4.3 11L6.5 13.2Z" fill="#6a4a2a"/></svg>
<div class="t" style="left:125.00px;top:184.00px;transform-origin:0 0;font-size:12px;line-height:12px;transform:scaleX(0.9469);">Edit</div>
<svg class="a" style="left:152.5px;top:182.5px;" width="16" height="16" viewBox="0 0 16 16"><defs><linearGradient id="dlg" x1="0" y1="0" x2="0" y2="1"><stop offset="0" stop-color="#ff5050"/><stop offset="1" stop-color="#c01010"/></linearGradient></defs><path d="M0.8 3.2L3.2 0.8L7.5 5.1L11.8 0.8L14.2 3.2L9.9 7.5L14.2 11.8L11.8 14.2L7.5 9.9L3.2 14.2L0.8 11.8L5.1 7.5Z" fill="url(#dlg)" stroke="#a01010" stroke-width="0.6" stroke-linejoin="round"/></svg>
<svg class="a" style="left:174.5px;top:182px;" width="17" height="16" viewBox="0 0 17 16"><rect x="0.5" y="7.5" width="15.5" height="7.5" fill="#eef4fb" stroke="#5a86c0"/><path d="M3 10L5.5 13M5.5 10L3 13" stroke="#3a5a88" stroke-width="0.9"/><path d="M7 14L7.6 11.2L14.2 0.8L16.2 2L9.6 12.4Z" fill="#f8cc3a" stroke="#9a6a10" stroke-width="0.6"/><path d="M14.2 0.8L16.2 2L16.6 1.2Q16.3 0 15 0Z" fill="#e04848"/></svg>
<svg class="a" style="left:198px;top:181.5px;" width="17" height="17" viewBox="0 0 17 17"><path d="M0.5 0.5H7L10.5 4V12.5H0.5Z" fill="#f6f9fd" stroke="#5a86c0"/><path d="M7 0.5V4H10.5" fill="none" stroke="#5a86c0"/><rect x="7.5" y="7.5" width="8.5" height="8.5" fill="#eef4fb" stroke="#5a86c0"/><path d="M9.3 11.8L11.2 14L14.6 9.3" fill="none" stroke="#1ea01e" stroke-width="1.6"/></svg>
<div class="t" style="left:218.40px;top:184.00px;transform-origin:0 0;font-size:12px;line-height:12px;transform:scaleX(0.9412);">Properties</div>
<div class="a" style="left:278px;top:179px;width:1px;height:23px;background:#b8b8b8;"></div>
<svg class="a" style="left:284px;top:182px;" width="17" height="16" viewBox="0 0 17 16"><path d="M0.8 3.8Q0.8 2.8 1.8 2.8H5.5L7 4.3H11.5V14.2H0.8Z" fill="#f7d24a" stroke="#c48f12" stroke-width="1.1"/><rect x="0.8" y="6.8" width="13" height="7.5" fill="#f8d440" stroke="#c48f12" stroke-width="1.1"/><rect x="1.5" y="7.5" width="11.5" height="1.3" fill="#fff6c0"/><path d="M12 0.5L13 1.6L14.5 1.3L14.6 2.8L16 3.5L15.1 4.7L16 5.9L14.6 6.6L14.5 8.1L13 7.8L12 8.9L11 7.8L9.5 8.1L9.4 6.6L8 5.9L8.9 4.7L8 3.5L9.4 2.8L9.5 1.3L11 1.6Z" fill="#9ab8d8" stroke="#4a6a90" stroke-width="0.6"/><circle cx="12" cy="4.7" r="1.7" fill="#fff"/></svg>
<svg class="a" style="left:307px;top:181.5px;" width="17" height="17" viewBox="0 0 17 17"><defs><linearGradient id="afg" x1="0" y1="0" x2="0" y2="1"><stop offset="0" stop-color="#ffffff"/><stop offset="1" stop-color="#d8e6f5"/></linearGradient></defs><path d="M0.5 0.5H7.5L11.5 4.5V15.5H0.5Z" fill="url(#afg)" stroke="#5a86c0"/><rect x="6.5" y="6.5" width="9.5" height="9.5" fill="#eef4fb" stroke="#2a3a50" stroke-width="1.2"/><path d="M8.5 8.8Q12 8.5 13 12" fill="none" stroke="#2a4a70" stroke-width="1.6"/><path d="M11 11.5H14.5V8Z" fill="#2a4a70"/></svg>
<div class="a" style="left:334px;top:183px;width:3px;height:15px;background:repeating-linear-gradient(#b9b9b9 0 1px,transparent 1px 2px)"></div>
<svg class="a" style="left:341px;top:182.5px;" width="15" height="15" viewBox="0 0 15 15"><rect x="0.6" y="0.6" width="13.8" height="13.8" fill="#eef3fa" stroke="#4a6a98" stroke-width="1.2"/><path d="M7.5 3.2V11.8M3.2 7.5H11.8" stroke="#2f5a90" stroke-width="1.8"/></svg>
<svg class="a" style="left:367px;top:182px;" width="9" height="6" viewBox="0 0 9 6"><path d="M0.5 0.5L3.5 3L0.5 5.5M4.5 0.5L7.5 3L4.5 5.5" fill="none" stroke="#000" stroke-width="1.4"/></svg>
<div class="a" style="left:386px;top:151px;width:440px;height:24px;background:#f4f4f4;border-radius:3px;"></div>
<div class="a" style="left:826px;top:151px;width:26px;height:24px;background:#f4f4f4;border-radius:3px;"></div>
<div class="a" style="left:386px;top:178px;width:292px;height:24px;background:#f4f4f4;border-radius:3px;"></div>
<div class="a" style="left:680px;top:178px;width:49px;height:24px;background:#f4f4f4;border-radius:3px;"></div>
<div class="a" style="left:731px;top:178px;width:76px;height:24px;background:#f4f4f4;border-radius:3px;"></div>
<div class="a" style="left:390px;top:156px;width:3px;height:15px;background:repeating-linear-gradient(#b9b9b9 0 1px,transparent 1px 2px)"></div>
<div class="a" style="left:394px;top:153px;width:114px;height:21px;background:#fff;"></div>
<div class="a" style="left:496px;top:154px;width:11px;height:19px;background:#f0f0f0;"></div>
<svg class="a" style="left:498px;top:162px;" width="7" height="4" viewBox="0 0 7 4"><path d="M0 0H7L3.5 4Z" fill="#000"/></svg>
<svg class="a" style="left:397px;top:155px;" width="13" height="16" viewBox="0 0 13 16"><defs><linearGradient id="w8b" x1="0" y1="0" x2="0" y2="1"><stop offset="0" stop-color="#f9f0b0"/><stop offset="1" stop-color="#e2b848"/></linearGradient><linearGradient id="w8f" x1="0" y1="0" x2="1" y2="1"><stop offset="0" stop-color="#fdf8c8"/><stop offset="1" stop-color="#e8cc60"/></linearGradient></defs><path d="M1.5 0.5H11Q12 0.5 12 1.5V6H12.5V15H1.5Z" fill="url(#w8b)" stroke="#dcc060" stroke-width="0.8"/><path d="M0.5 1Q0.5 0.5 1.5 0.5H6.5V15.5Q5 16 4 15.5H1Q0.5 15.5 0.5 15Z" fill="url(#w8f)" stroke="#dcc060" stroke-width="0.8"/><rect x="6.5" y="1" width="1.5" height="14.5" fill="#d6b248" opacity="0.8"/><path d="M3.5 1.5L5 3V9H4Z" fill="#fff" opacity="0.85"/><rect x="11" y="7.5" width="1.1" height="2.5" fill="#e8eef5"/><rect x="11" y="10" width="1.1" height="3.5" fill="#2f9ae8"/></svg>
<div class="t" style="left:414.30px;top:156.50px;transform-origin:0 0;font-size:12px;line-height:12px;transform:scaleX(0.9640);">arch</div>
<svg class="a" style="left:512px;top:154px;" width="17" height="17" viewBox="0 0 17 17"><defs><linearGradient id="opg" x1="0" y1="0" x2="0" y2="1"><stop offset="0" stop-color="#fff2a0"/><stop offset="1" stop-color="#f0c030"/></linearGradient></defs><path d="M0.8 5.8Q0.8 4.8 1.8 4.8H5L6.5 6.3H11.5V15.5H0.8Z" fill="#e8b828" stroke="#b88a10" stroke-width="1"/><path d="M3.2 9.2H16.2L13.5 15.5H0.8Z" fill="url(#opg)" stroke="#b88a10" stroke-width="1" stroke-linejoin="round"/><path d="M6 8Q6.5 3 12 3.2V0.5L16.5 4.5L12 8.5V5.8Q9 5.8 6 8Z" fill="#3cb03c" stroke="#1a801a" stroke-width="0.6" stroke-linejoin="round"/></svg>
<svg class="a" style="left:535px;top:155px;" width="16" height="16" viewBox="0 0 16 16"><rect x="0.75" y="0.75" width="14.5" height="14.5" fill="#eef3fa" stroke="#1f4a90" stroke-width="1.5"/><rect x="1.5" y="1.5" width="13" height="1.8" fill="#6aa0e0"/><path d="M3.8 5H12.2L9 8.8V12.5H7V8.8Z" fill="#a8a8a8" stroke="#505050" stroke-width="0.8" stroke-linejoin="round"/></svg>
<div class="a" style="left:562px;top:156px;width:3px;height:15px;background:repeating-linear-gradient(#b9b9b9 0 1px,transparent 1px 2px)"></div>
<svg class="a" style="left:568px;top:158px;" width="17" height="12" viewBox="0 0 17 12"><path d="M0.5 5L8 0.5V3H16V7H8V9.5Z" fill="#d4d4d4" stroke="#c4c4c4" stroke-width="0.8" stroke-linejoin="round"/></svg>
<svg class="a" style="left:591px;top:162px;" width="6" height="4" viewBox="0 0 6 4"><path d="M0 0H6L3 3.5Z" fill="#8a8a8a"/></svg>
<svg class="a" style="left:603px;top:158px;" width="17" height="12" viewBox="0 0 17 12"><path d="M16 5L8.5 0.5V3H0.5V7H8.5V9.5Z" fill="#d4d4d4" stroke="#c4c4c4" stroke-width="0.8" stroke-linejoin="round"/></svg>
<svg class="a" style="left:626px;top:162px;" width="6" height="4" viewBox="0 0 6 4"><path d="M0 0H6L3 3.5Z" fill="#8a8a8a"/></svg>
<div class="a" style="left:643px;top:156px;width:3px;height:15px;background:repeating-linear-gradient(#b9b9b9 0 1px,transparent 1px 2px)"></div>
<svg class="a" style="left:648px;top:155.5px;" width="15" height="15" viewBox="0 0 15 15"><defs><linearGradient id="yfg" x1="0" y1="0" x2="0" y2="1"><stop offset="0" stop-color="#fff4a8"/><stop offset="1" stop-color="#f2c832"/></linearGradient></defs><path d="M0.8 2.2Q0.8 0.8 2 0.8H5.5L7 2.3H13.2Q14.2 2.3 14.2 3.3V13.2H0.8Z" fill="#f7d24a" stroke="#c48f12" stroke-width="1.1"/><rect x="0.8" y="4.3" width="13.4" height="9.2" fill="url(#yfg)" stroke="#c48f12" stroke-width="1.1"/><rect x="1.5" y="5" width="12" height="1.2" fill="#fffbe0"/><path d="M4.5 8.5L6.5 6.3L8.5 8.5M6.5 6.5V11H11.5" fill="none" stroke="#1e2a3a" stroke-width="1.3"/></svg>
<svg class="a" style="left:671px;top:155.5px;" width="15" height="15" viewBox="0 0 15 15"><defs><linearGradient id="yfg" x1="0" y1="0" x2="0" y2="1"><stop offset="0" stop-color="#fff4a8"/><stop offset="1" stop-color="#f2c832"/></linearGradient></defs><path d="M0.8 2.2Q0.8 0.8 2 0.8H5.5L7 2.3H13.2Q14.2 2.3 14.2 3.3V13.2H0.8Z" fill="#f7d24a" stroke="#c48f12" stroke-width="1.1"/><rect x="0.8" y="4.3" width="13.4" height="9.2" fill="url(#yfg)" stroke="#c48f12" stroke-width="1.1"/><rect x="1.5" y="5" width="12" height="1.2" fill="#fffbe0"/><path d="M8.5 6.5L6 11.5" stroke="#1e2a3a" stroke-width="1.2"/></svg>
<svg class="a" style="left:694px;top:155px;" width="16" height="16" viewBox="0 0 16 16"><defs><linearGradient id="hmg" x1="0" y1="0" x2="0" y2="1"><stop offset="0" stop-color="#d8e8f8"/><stop offset="1" stop-color="#9cc0e8"/></linearGradient></defs><path d="M2.5 7.5V15.2H13.5V7.5L8 2.5Z" fill="url(#hmg)" stroke="#4a6a98" stroke-width="1"/><path d="M0.8 8.3L8 1.3L15.2 8.3" fill="none" stroke="#3a5a88" stroke-width="1.4"/><rect x="6.3" y="9.3" width="3.4" height="5.9" fill="#2f6fd8"/></svg>
<svg class="a" style="left:717px;top:154.5px;" width="16" height="17" viewBox="0 0 16 17"><defs><linearGradient id="grf" x1="0" y1="0" x2="0" y2="1"><stop offset="0" stop-color="#8ee08a"/><stop offset="1" stop-color="#2aa82a"/></linearGradient></defs><path d="M1.2 7.2Q2 1.5 8 1.3Q11 1.3 12.5 3L14.8 0.8V7.2H8.5L10.8 5Q9.8 4 8 4Q5 4.2 4.2 7.2Z" fill="url(#grf)" stroke="#1a8a1a" stroke-width="0.9" stroke-linejoin="round"/><path d="M14.8 9.6Q14 15.3 8 15.5Q5 15.5 3.5 13.8L1.2 16V9.6H7.5L5.2 11.8Q6.2 12.8 8 12.8Q11 12.6 11.8 9.6Z" fill="url(#grf)" stroke="#1a8a1a" stroke-width="0.9" stroke-linejoin="round"/></svg>
<div class="a" style="left:740px;top:152px;width:1px;height:23px;background:#b8b8b8;"></div>
<svg class="a" style="left:745.5px;top:154.5px;" width="17" height="17" viewBox="0 0 17 17"><path d="M0.8 2.2Q0.8 1.2 1.8 1.2H5L6.5 2.7H11.5V11H0.8Z" fill="#f7d24a" stroke="#c48f12" stroke-width="1"/><rect x="0.8" y="4.3" width="11.5" height="6.7" fill="#f8d440" stroke="#c48f12" stroke-width="1"/><rect x="1.5" y="5" width="10" height="1.2" fill="#fff6c0"/><rect x="5.5" y="6" width="3" height="3" rx="0.5" fill="#3a4350"/><rect x="11" y="6" width="3" height="3" rx="0.5" fill="#3a4350"/><rect x="4.8" y="8.5" width="4.4" height="7.8" rx="1" fill="#2e3640"/><rect x="10.3" y="8.5" width="4.4" height="7.8" rx="1" fill="#2e3640"/><rect x="8.8" y="9.5" width="2" height="2.5" fill="#4a5360"/><rect x="5.6" y="14" width="2.8" height="1.6" fill="#e8eef5"/><rect x="11.1" y="14" width="2.8" height="1.6" fill="#e8eef5"/><rect x="5.6" y="9.5" width="1" height="3" fill="#8a96a8"/><rect x="11.1" y="9.5" width="1" height="3" fill="#8a96a8"/></svg>
<div class="t" style="left:766.40px;top:156.50px;transform-origin:0 0;font-size:12px;line-height:12px;transform:scaleX(0.9025);word-spacing:1.50px;">Find Files</div>
<div class="a" style="left:822px;top:152px;width:1px;height:23px;background:#b8b8b8;"></div>
<div class="a" style="left:824px;top:152px;width:24px;height:23px;background:#e5f0fb;box-sizing:border-box;border:1px solid #3d9bf5;"></div>
<svg class="a" style="left:828px;top:155px;" width="17" height="16" viewBox="0 0 17 16"><path d="M0.5 0.5h2.5l1 1h4v5.8h-7.5z" fill="#f7d24a" stroke="#c48f12" stroke-width="1"/><rect x="0.5" y="2.8" width="7.5" height="4" fill="#fff0a0" stroke="#c48f12" stroke-width="1"/><path d="M8.5 8.2h2.5l1 1h4v5.8h-7.5z" fill="#f7d24a" stroke="#c48f12" stroke-width="1"/><rect x="8.5" y="10.5" width="7.5" height="4" fill="#fff0a0" stroke="#c48f12" stroke-width="1"/><rect x="3" y="8" width="1" height="1" fill="#111"/><rect x="3" y="10" width="1" height="1" fill="#111"/><rect x="3" y="12" width="1" height="1" fill="#111"/><rect x="5" y="12" width="1" height="1" fill="#111"/><rect x="7" y="12" width="1" height="1" fill="#111"/></svg>
<div class="a" style="left:390px;top:183px;width:3px;height:15px;background:repeating-linear-gradient(#b9b9b9 0 1px,transparent 1px 2px)"></div>
<svg class="a" style="left:396px;top:182px;" width="17" height="17" viewBox="0 0 17 17"><path d="M5.5 0.5H12L15.5 4V12.5H5.5Z" fill="#f6f9fc" stroke="#4f7ab0" stroke-width="0.9"/><path d="M12 0.5V4H15.5" fill="#e6eef8" stroke="#4f7ab0" stroke-width="0.8"/><rect x="7.5" y="2.5" width="3" height="1" fill="#6a94c8"/><path d="M0.5 4.5H7L10.5 8V15.5H0.5Z" fill="#f6f9fc" stroke="#4f7ab0" stroke-width="0.9"/><rect x="2" y="7" width="3" height="1" fill="#6a94c8"/><rect x="2" y="9.5" width="6" height="1" fill="#6a94c8"/><rect x="2" y="12" width="6" height="1" fill="#6a94c8"/><path d="M15.8 9.6L12.6 12.8L15 15.2V15.8H7.2V8H7.8L10.2 10.4L13.4 7.2Z" fill="#3cc03c" stroke="#1a8a1a" stroke-width="0.7" stroke-linejoin="round"/></svg>
<div class="t" style="left:416.00px;top:184.00px;transform-origin:0 0;font-size:12px;line-height:12px;transform:scaleX(1.0030);">Download</div>
<svg class="a" style="left:476px;top:182px;" width="17" height="17" viewBox="0 0 17 17"><path d="M5.5 0.5H12L15.5 4V12.5H5.5Z" fill="#f6f9fc" stroke="#9a9a9a" stroke-width="0.9"/><path d="M12 0.5V4H15.5" fill="#e6eef8" stroke="#9a9a9a" stroke-width="0.8"/><rect x="7.5" y="2.5" width="3" height="1" fill="#b0b0b0"/><path d="M0.5 4.5H7L10.5 8V15.5H0.5Z" fill="#f6f9fc" stroke="#4f7ab0" stroke-width="0.9"/><rect x="2" y="7" width="3" height="1" fill="#6a94c8"/><rect x="2" y="9.5" width="6" height="1" fill="#6a94c8"/><rect x="2" y="12" width="6" height="1" fill="#6a94c8"/><path d="M15.8 9.6L12.6 12.8L15 15.2V15.8H7.2V8H7.8L10.2 10.4L13.4 7.2Z" fill="#3cc03c" stroke="#1a8a1a" stroke-width="0.7" stroke-linejoin="round"/></svg>
<div class="a" style="left:500px;top:179px;width:1px;height:23px;background:#b8b8b8;"></div>
<svg class="a" style="left:505.5px;top:182px;" width="18" height="16" viewBox="0 0 18 16"><defs><linearGradient id="edg" x1="0" y1="0" x2="0" y2="1"><stop offset="0" stop-color="#ffffff"/><stop offset="1" stop-color="#dce8f5"/></linearGradient></defs><rect x="0.5" y="1.5" width="11.5" height="13.5" fill="url(#edg)" stroke="#5a86c0"/><path d="M3.5 14L4.3 11L13.8 1.5L16 3.7L6.5 13.2Z" fill="#f8cc3a" stroke="#9a6a10" stroke-width="0.6"/><path d="M13.8 1.5L16 3.7L16.8 2.9Q16.8 1.5 15.4 0.8Z" fill="#e04848"/><path d="M3.5 14L4.3 11L6.5 13.2Z" fill="#6a4a2a"/></svg>
<div class="t" style="left:526.00px;top:184.00px;transform-origin:0 0;font-size:12px;line-height:12px;transform:scaleX(0.9469);">Edit</div>
<svg class="a" style="left:553.5px;top:182.5px;" width="16" height="16" viewBox="0 0 16 16"><defs><linearGradient id="dlg" x1="0" y1="0" x2="0" y2="1"><stop offset="0" stop-color="#ff5050"/><stop offset="1" stop-color="#c01010"/></linearGradient></defs><path d="M0.8 3.2L3.2 0.8L7.5 5.1L11.8 0.8L14.2 3.2L9.9 7.5L14.2 11.8L11.8 14.2L7.5 9.9L3.2 14.2L0.8 11.8L5.1 7.5Z" fill="url(#dlg)" stroke="#a01010" stroke-width="0.6" stroke-linejoin="round"/></svg>
<svg class="a" style="left:575.5px;top:182px;" width="17" height="16" viewBox="0 0 17 16"><rect x="0.5" y="7.5" width="15.5" height="7.5" fill="#eef4fb" stroke="#5a86c0"/><path d="M3 10L5.5 13M5.5 10L3 13" stroke="#3a5a88" stroke-width="0.9"/><path d="M7 14L7.6 11.2L14.2 0.8L16.2 2L9.6 12.4Z" fill="#f8cc3a" stroke="#9a6a10" stroke-width="0.6"/><path d="M14.2 0.8L16.2 2L16.6 1.2Q16.3 0 15 0Z" fill="#e04848"/></svg>
<svg class="a" style="left:599px;top:181.5px;" width="17" height="17" viewBox="0 0 17 17"><path d="M0.5 0.5H7L10.5 4V12.5H0.5Z" fill="#f6f9fd" stroke="#5a86c0"/><path d="M7 0.5V4H10.5" fill="none" stroke="#5a86c0"/><rect x="7.5" y="7.5" width="8.5" height="8.5" fill="#eef4fb" stroke="#5a86c0"/><path d="M9.3 11.8L11.2 14L14.6 9.3" fill="none" stroke="#1ea01e" stroke-width="1.6"/></svg>
<div class="t" style="left:619.50px;top:184.00px;transform-origin:0 0;font-size:12px;line-height:12px;transform:scaleX(0.9412);">Properties</div>
<div class="a" style="left:679px;top:179px;width:1px;height:23px;background:#b8b8b8;"></div>
<svg class="a" style="left:684px;top:182px;" width="17" height="16" viewBox="0 0 17 16"><path d="M0.8 3.8Q0.8 2.8 1.8 2.8H5.5L7 4.3H11.5V14.2H0.8Z" fill="#f7d24a" stroke="#c48f12" stroke-width="1.1"/><rect x="0.8" y="6.8" width="13" height="7.5" fill="#f8d440" stroke="#c48f12" stroke-width="1.1"/><rect x="1.5" y="7.5" width="11.5" height="1.3" fill="#fff6c0"/><path d="M12 0.5L13 1.6L14.5 1.3L14.6 2.8L16 3.5L15.1 4.7L16 5.9L14.6 6.6L14.5 8.1L13 7.8L12 8.9L11 7.8L9.5 8.1L9.4 6.6L8 5.9L8.9 4.7L8 3.5L9.4 2.8L9.5 1.3L11 1.6Z" fill="#9ab8d8" stroke="#4a6a90" stroke-width="0.6"/><circle cx="12" cy="4.7" r="1.7" fill="#fff"/></svg>
<svg class="a" style="left:707px;top:181.5px;" width="17" height="17" viewBox="0 0 17 17"><defs><linearGradient id="afg" x1="0" y1="0" x2="0" y2="1"><stop offset="0" stop-color="#ffffff"/><stop offset="1" stop-color="#d8e6f5"/></linearGradient></defs><path d="M0.5 0.5H7.5L11.5 4.5V15.5H0.5Z" fill="url(#afg)" stroke="#5a86c0"/><rect x="6.5" y="6.5" width="9.5" height="9.5" fill="#eef4fb" stroke="#2a3a50" stroke-width="1.2"/><path d="M8.5 8.8Q12 8.5 13 12" fill="none" stroke="#2a4a70" stroke-width="1.6"/><path d="M11 11.5H14.5V8Z" fill="#2a4a70"/></svg>
<div class="a" style="left:735px;top:183px;width:3px;height:15px;background:repeating-linear-gradient(#b9b9b9 0 1px,transparent 1px 2px)"></div>
<svg class="a" style="left:741px;top:182.5px;" width="15" height="15" viewBox="0 0 15 15"><rect x="0.6" y="0.6" width="13.8" height="13.8" fill="#eef3fa" stroke="#4a6a98" stroke-width="1.2"/><path d="M7.5 3.2V11.8M3.2 7.5H11.8" stroke="#2f5a90" stroke-width="1.8"/></svg>
<svg class="a" style="left:765px;top:182.5px;" width="15" height="15" viewBox="0 0 15 15"><rect x="0.6" y="0.6" width="13.8" height="13.8" fill="#eef3fa" stroke="#4a6a98" stroke-width="1.2"/><path d="M3.2 7.5H11.8" stroke="#2f5a90" stroke-width="1.8"/></svg>
<svg class="a" style="left:787px;top:182.5px;" width="15" height="15" viewBox="0 0 15 15"><rect x="0.6" y="0.6" width="13.8" height="13.8" fill="#eef3fa" stroke="#4a6a98" stroke-width="1.2"/><path d="M3 3.5H12L7.5 12Z" fill="none" stroke="#2f5a90" stroke-width="1.5" stroke-linejoin="round"/><path d="M4.5 5.8H10.5" stroke="#2f5a90" stroke-width="1.1"/></svg>
<div class="a" style="left:0px;top:203px;width:380px;height:21px;background:#bfcddb;"></div>
<div class="t" style="left:5.50px;top:207.50px;transform-origin:0 0;font-size:12px;line-height:12px;">C:\Users\admin_yousif\Documents</div>
<div class="a" style="left:385px;top:203px;width:895px;height:21px;background:#99b4d1;"></div>
<div class="t" style="left:390.00px;top:207.50px;transform-origin:0 0;font-size:12px;line-height:12px;transform:scaleX(1.0192);">/u02/arch</div>
<div class="a" style="left:0px;top:224px;width:380px;height:718px;background:#fff;box-sizing:border-box;border:1px solid #828790;"></div>
<div class="a" style="left:1px;top:225px;width:378px;height:20px;background:#fafafa;"></div>
<div class="a" style="left:2px;top:226px;width:150px;height:18px;box-sizing:border-box;border:1px solid #e8e8e8;"></div>
<div class="a" style="left:152px;top:226px;width:71px;height:18px;box-sizing:border-box;border:1px solid #e8e8e8;"></div>
<div class="a" style="left:223px;top:226px;width:120px;height:18px;box-sizing:border-box;border:1px solid #e8e8e8;"></div>
<div class="a" style="left:343px;top:226px;width:36px;height:18px;box-sizing:border-box;border:1px solid #e8e8e8;border-right:none;"></div>
<div class="a" style="left:1px;top:244px;width:378px;height:1px;background:#e5e5e5;"></div>
<div class="a" style="left:151px;top:225px;width:1px;height:19px;background:#e5e5e5;"></div>
<div class="a" style="left:222px;top:225px;width:1px;height:19px;background:#e5e5e5;"></div>
<div class="a" style="left:342px;top:225px;width:1px;height:19px;background:#e5e5e5;"></div>
<div class="t" style="left:8.50px;top:229.80px;transform-origin:0 0;font-size:12px;line-height:12px;transform:scaleX(0.9519);">Name</div>
<svg class="a" style="left:73px;top:229px;" width="8" height="4" viewBox="0 0 8 4"><path d="M0 0H8L4 4Z" fill="#000"/></svg>
<div class="t" style="left:189.66px;top:229.80px;width:25.34px;text-align:right;transform-origin:100% 0;font-size:12px;line-height:12px;transform:scaleX(0.8783);">Size</div>
<div class="t" style="left:228.00px;top:229.80px;transform-origin:0 0;font-size:12px;line-height:12px;transform:scaleX(0.9793);">Type</div>
<div class="t" style="left:348.90px;top:229.80px;transform-origin:0 0;font-size:12px;line-height:12px;transform:scaleX(0.9442);width:30.8px;overflow:hidden;">Changed</div>
<svg class="a" style="left:7px;top:246px;" width="13" height="16" viewBox="0 0 13 16"><defs><linearGradient id="w8b" x1="0" y1="0" x2="0" y2="1"><stop offset="0" stop-color="#f9f0b0"/><stop offset="1" stop-color="#e2b848"/></linearGradient><linearGradient id="w8f" x1="0" y1="0" x2="1" y2="1"><stop offset="0" stop-color="#fdf8c8"/><stop offset="1" stop-color="#e8cc60"/></linearGradient></defs><path d="M1.5 0.5H11Q12 0.5 12 1.5V6H12.5V15H1.5Z" fill="url(#w8b)" stroke="#dcc060" stroke-width="0.8"/><path d="M0.5 1Q0.5 0.5 1.5 0.5H6.5V15.5Q5 16 4 15.5H1Q0.5 15.5 0.5 15Z" fill="url(#w8f)" stroke="#dcc060" stroke-width="0.8"/><rect x="6.5" y="1" width="1.5" height="14.5" fill="#d6b248" opacity="0.8"/><path d="M3.5 1.5L5 3V9H4Z" fill="#fff" opacity="0.85"/><rect x="11" y="7.5" width="1.1" height="2.5" fill="#e8eef5"/><rect x="11" y="10" width="1.1" height="3.5" fill="#2f9ae8"/><path d="M2.2 9L4.6 6.4L7 9Z" fill="#1a1a1a"/><path d="M4.6 8.5V12.3H10.5" fill="none" stroke="#1a1a1a" stroke-width="1.2"/></svg>
<div class="t" style="left:24.50px;top:249.00px;transform-origin:0 0;font-size:12px;line-height:12px;">..</div>
<div class="t" style="left:228.40px;top:249.00px;transform-origin:0 0;font-size:12px;line-height:12px;transform:scaleX(0.9673);word-spacing:1.50px;">Parent directory</div>
<div class="t" style="left:349.00px;top:249.00px;transform-origin:0 0;font-size:12px;line-height:12px;transform:scaleX(0.9363);width:31.0px;overflow:hidden;">7/27/2016</div>
<svg class="a" style="left:7px;top:265px;" width="13" height="16" viewBox="0 0 13 16"><defs><linearGradient id="w8b" x1="0" y1="0" x2="0" y2="1"><stop offset="0" stop-color="#f9f0b0"/><stop offset="1" stop-color="#e2b848"/></linearGradient><linearGradient id="w8f" x1="0" y1="0" x2="1" y2="1"><stop offset="0" stop-color="#fdf8c8"/><stop offset="1" stop-color="#e8cc60"/></linearGradient></defs><path d="M1.5 0.5H11Q12 0.5 12 1.5V6H12.5V15H1.5Z" fill="url(#w8b)" stroke="#dcc060" stroke-width="0.8"/><path d="M0.5 1Q0.5 0.5 1.5 0.5H6.5V15.5Q5 16 4 15.5H1Q0.5 15.5 0.5 15Z" fill="url(#w8f)" stroke="#dcc060" stroke-width="0.8"/><rect x="6.5" y="1" width="1.5" height="14.5" fill="#d6b248" opacity="0.8"/><path d="M3.5 1.5L5 3V9H4Z" fill="#fff" opacity="0.85"/><rect x="11" y="7.5" width="1.1" height="2.5" fill="#e8eef5"/><rect x="11" y="10" width="1.1" height="3.5" fill="#2f9ae8"/></svg>
<div class="t" style="left:24.50px;top:268.00px;transform-origin:0 0;font-size:12px;line-height:12px;transform:scaleX(0.9592);">sosreport</div>
<div class="t" style="left:228.40px;top:268.00px;transform-origin:0 0;font-size:12px;line-height:12px;transform:scaleX(0.9524);word-spacing:1.50px;">File folder</div>
<div class="t" style="left:349.00px;top:268.00px;transform-origin:0 0;font-size:12px;line-height:12px;transform:scaleX(0.9363);width:31.0px;overflow:hidden;">7/25/2016</div>
<svg class="a" style="left:7px;top:284px;" width="13" height="16" viewBox="0 0 13 16"><defs><linearGradient id="w8b" x1="0" y1="0" x2="0" y2="1"><stop offset="0" stop-color="#f9f0b0"/><stop offset="1" stop-color="#e2b848"/></linearGradient><linearGradient id="w8f" x1="0" y1="0" x2="1" y2="1"><stop offset="0" stop-color="#fdf8c8"/><stop offset="1" stop-color="#e8cc60"/></linearGradient></defs><path d="M1.5 0.5H11Q12 0.5 12 1.5V6H12.5V15H1.5Z" fill="url(#w8b)" stroke="#dcc060" stroke-width="0.8"/><path d="M0.5 1Q0.5 0.5 1.5 0.5H6.5V15.5Q5 16 4 15.5H1Q0.5 15.5 0.5 15Z" fill="url(#w8f)" stroke="#dcc060" stroke-width="0.8"/><rect x="6.5" y="1" width="1.5" height="14.5" fill="#d6b248" opacity="0.8"/><path d="M3.5 1.5L5 3V9H4Z" fill="#fff" opacity="0.85"/><rect x="11" y="7.5" width="1.1" height="2.5" fill="#e8eef5"/><rect x="11" y="10" width="1.1" height="3.5" fill="#2f9ae8"/></svg>
<div class="t" style="left:24.50px;top:287.00px;transform-origin:0 0;font-size:12px;line-height:12px;transform:scaleX(0.9304);">liniw-20160724162214...</div>
<div class="t" style="left:228.40px;top:287.00px;transform-origin:0 0;font-size:12px;line-height:12px;transform:scaleX(0.9524);word-spacing:1.50px;">File folder</div>
<div class="t" style="left:349.00px;top:287.00px;transform-origin:0 0;font-size:12px;line-height:12px;transform:scaleX(0.9363);width:31.0px;overflow:hidden;">7/25/2016</div>
<svg class="a" style="left:5.5px;top:303.5px;" width="17" height="17" viewBox="0 0 17 17"><defs><linearGradient id="cfg" x1="0" y1="0" x2="0" y2="1"><stop offset="0" stop-color="#e8f2fc"/><stop offset="1" stop-color="#b8d4f0"/></linearGradient></defs><path d="M2.2 0.5H13.8V12.5H2.2Z" fill="url(#cfg)" stroke="#5a8ac8" stroke-width="0.9"/><path d="M0.5 13L2.2 12H13.8L15.5 13V15.5H0.5Z" fill="#cfe2f5" stroke="#5a8ac8" stroke-width="0.9"/><path d="M4 7.5L6 2.5L8 7.5M4.8 5.8H7.2" fill="none" stroke="#f07a1a" stroke-width="1.3"/><path d="M9.5 3H12.5M9.5 5H12.5" stroke="#4a86d0" stroke-width="0.9"/><path d="M4 9.5H12M4 11H12" stroke="#8aa8c8" stroke-width="0.7"/></svg>
<div class="t" style="left:24.50px;top:306.00px;transform-origin:0 0;font-size:12px;line-height:12px;transform:scaleX(1.0620);">tm.conf</div>
<div class="t" style="left:178.30px;top:306.00px;width:36.19px;text-align:right;transform-origin:100% 0;font-size:12px;line-height:12px;transform:scaleX(0.7982);word-spacing:1.50px;">25 KB</div>
<div class="t" style="left:228.40px;top:306.00px;transform-origin:0 0;font-size:12px;line-height:12px;transform:scaleX(0.8944);word-spacing:1.50px;">CONF File</div>
<div class="t" style="left:349.00px;top:306.00px;transform-origin:0 0;font-size:12px;line-height:12px;transform:scaleX(0.9363);width:31.0px;overflow:hidden;">7/15/2016</div>
<svg class="a" style="left:5.5px;top:322.5px;" width="17" height="16" viewBox="0 0 17 16"><path d="M0.5 2.8L4 1.3H15.5V6.0H4Z" fill="#a0105a" stroke="#111" stroke-width="0.6"/><path d="M0.5 2.8L4 3.0V6.0L0.5 4.3Z" fill="#f4f4f4" stroke="#111" stroke-width="0.6"/><rect x="4" y="3.0" width="11.5" height="3" fill="#8a1048"/><rect x="5" y="3.0" width="1.2" height="3" fill="#e8d040"/><path d="M0.5 7.3L4 5.8H15.5V10.5H4Z" fill="#1a70d0" stroke="#111" stroke-width="0.6"/><path d="M0.5 7.3L4 7.5V10.5L0.5 8.8Z" fill="#f4f4f4" stroke="#111" stroke-width="0.6"/><rect x="4" y="7.5" width="11.5" height="3" fill="#1450a8"/><rect x="5" y="7.5" width="1.2" height="3" fill="#e8d040"/><path d="M0.5 11.8L4 10.3H15.5V15.0H4Z" fill="#20c070" stroke="#111" stroke-width="0.6"/><path d="M0.5 11.8L4 12.0V15.0L0.5 13.3Z" fill="#f4f4f4" stroke="#111" stroke-width="0.6"/><rect x="4" y="12.0" width="11.5" height="3" fill="#109040"/><rect x="5" y="12.0" width="1.2" height="3" fill="#e8d040"/><rect x="5" y="1.5" width="4" height="1.5" fill="#d8e040"/></svg>
<div class="t" style="left:24.50px;top:325.00px;transform-origin:0 0;font-size:12px;line-height:12px;transform:scaleX(0.9756);">sosreport-liniw-20160...</div>
<div class="t" style="left:154.96px;top:325.00px;width:59.55px;text-align:right;transform-origin:100% 0;font-size:12px;line-height:12px;transform:scaleX(0.8498);word-spacing:1.50px;">26,598 KB</div>
<div class="t" style="left:228.40px;top:325.00px;transform-origin:0 0;font-size:12px;line-height:12px;transform:scaleX(0.9272);word-spacing:1.50px;">WinRAR archive</div>
<div class="t" style="left:349.00px;top:325.00px;transform-origin:0 0;font-size:12px;line-height:12px;transform:scaleX(0.9363);width:31.0px;overflow:hidden;">7/24/2016</div>
<svg class="a" style="left:4.5px;top:340.5px;" width="17" height="17" viewBox="0 0 17 17"><defs><linearGradient id="dcg" x1="0" y1="0" x2="1" y2="1"><stop offset="0" stop-color="#ffffff"/><stop offset="1" stop-color="#e4e4e4"/></linearGradient></defs><path d="M3.5 1H10.5L13.5 4V16H3.5Z" fill="url(#dcg)" stroke="#8a8a8a" stroke-width="0.9"/><path d="M10.5 1V4H13.5" fill="#f0f0f0" stroke="#9a9a9a" stroke-width="0.8"/><path d="M4 1.5L5 0.5L6 1.5L7 0.5L8 1.5L9 0.5L10 1.5" fill="none" stroke="#9a9a9a" stroke-width="0.7"/><path d="M4.2 5.5H12.8M4.2 7.5H12.8M4.2 9.5H12.8M4.2 11.5H12.8M4.2 13.5H12.8" stroke="#a8c4e0" stroke-width="0.9"/></svg>
<div class="t" style="left:24.50px;top:344.00px;transform-origin:0 0;font-size:12px;line-height:12px;transform:scaleX(1.0504);">putty.log</div>
<div class="t" style="left:171.64px;top:344.00px;width:42.86px;text-align:right;transform-origin:100% 0;font-size:12px;line-height:12px;transform:scaleX(0.8223);word-spacing:1.50px;">134 KB</div>
<div class="t" style="left:228.40px;top:344.00px;transform-origin:0 0;font-size:12px;line-height:12px;transform:scaleX(0.9897);word-spacing:1.50px;">Text Document</div>
<div class="t" style="left:349.00px;top:344.00px;transform-origin:0 0;font-size:12px;line-height:12px;transform:scaleX(0.9363);width:31.0px;overflow:hidden;">3/29/2016</div>
<svg class="a" style="left:5.5px;top:360.5px;" width="17" height="16" viewBox="0 0 17 16"><defs><linearGradient id="exg" x1="0" y1="0" x2="1" y2="1"><stop offset="0" stop-color="#2a6ac8"/><stop offset="1" stop-color="#30a050"/></linearGradient></defs><rect x="0.5" y="1.5" width="15.5" height="11.5" fill="#f8f8f8" stroke="#7a7f8a" stroke-width="0.9"/><rect x="1" y="2" width="14.5" height="1.6" fill="#dde6f0"/><rect x="12" y="2.2" width="1" height="1" fill="#333"/><rect x="14" y="2.2" width="1" height="1" fill="#333"/><rect x="2.3" y="5" width="5" height="5.5" fill="url(#exg)"/><path d="M8.8 6H12.2M8.8 8H12.2M8.8 10H12.2" stroke="#9aa8b8" stroke-width="0.8"/><rect x="13.3" y="4.8" width="1" height="3" fill="#3a8ad8"/></svg>
<div class="t" style="left:24.50px;top:363.00px;transform-origin:0 0;font-size:12px;line-height:12px;transform:scaleX(0.9766);">putty.exe</div>
<div class="t" style="left:171.64px;top:363.00px;width:42.86px;text-align:right;transform-origin:100% 0;font-size:12px;line-height:12px;transform:scaleX(0.8223);word-spacing:1.50px;">226 KB</div>
<div class="t" style="left:228.40px;top:363.00px;transform-origin:0 0;font-size:12px;line-height:12px;transform:scaleX(1.0225);">Application</div>
<div class="t" style="left:349.00px;top:363.00px;transform-origin:0 0;font-size:12px;line-height:12px;transform:scaleX(0.9363);width:31.0px;overflow:hidden;">3/26/2016</div>
<svg class="a" style="left:4.5px;top:378.5px;" width="17" height="17" viewBox="0 0 17 17"><defs><linearGradient id="dcg" x1="0" y1="0" x2="1" y2="1"><stop offset="0" stop-color="#ffffff"/><stop offset="1" stop-color="#e4e4e4"/></linearGradient></defs><path d="M3.5 1H10.5L13.5 4V16H3.5Z" fill="url(#dcg)" stroke="#8a8a8a" stroke-width="0.9"/><path d="M10.5 1V4H13.5" fill="#f0f0f0" stroke="#9a9a9a" stroke-width="0.8"/></svg>
<div class="t" style="left:24.50px;top:382.00px;transform-origin:0 0;font-size:12px;line-height:12px;transform:scaleX(0.8991);">messages</div>
<div class="t" style="left:184.97px;top:382.00px;width:29.52px;text-align:right;transform-origin:100% 0;font-size:12px;line-height:12px;transform:scaleX(0.7843);word-spacing:1.50px;">8 KB</div>
<div class="t" style="left:228.40px;top:382.00px;transform-origin:0 0;font-size:12px;line-height:12px;transform:scaleX(0.8696);">File</div>
<div class="t" style="left:349.00px;top:382.00px;transform-origin:0 0;font-size:12px;line-height:12px;transform:scaleX(0.9363);width:31.0px;overflow:hidden;">7/27/2016</div>
<svg class="a" style="left:4.5px;top:397.5px;" width="17" height="17" viewBox="0 0 17 17"><defs><linearGradient id="dcg" x1="0" y1="0" x2="1" y2="1"><stop offset="0" stop-color="#ffffff"/><stop offset="1" stop-color="#e4e4e4"/></linearGradient></defs><path d="M3.5 1H10.5L13.5 4V16H3.5Z" fill="url(#dcg)" stroke="#8a8a8a" stroke-width="0.9"/><path d="M10.5 1V4H13.5" fill="#f0f0f0" stroke="#9a9a9a" stroke-width="0.8"/><path d="M4 1.5L5 0.5L6 1.5L7 0.5L8 1.5L9 0.5L10 1.5" fill="none" stroke="#9a9a9a" stroke-width="0.7"/><path d="M4.2 5.5H12.8M4.2 7.5H12.8M4.2 9.5H12.8M4.2 11.5H12.8M4.2 13.5H12.8" stroke="#a8c4e0" stroke-width="0.9"/></svg>
<div class="t" style="left:24.50px;top:401.00px;transform-origin:0 0;font-size:12px;line-height:12px;transform:scaleX(0.9954);">alert_iwtm.log</div>
<div class="t" style="left:161.62px;top:401.00px;width:52.87px;text-align:right;transform-origin:100% 0;font-size:12px;line-height:12px;transform:scaleX(0.8373);word-spacing:1.50px;">1,047 KB</div>
<div class="t" style="left:228.40px;top:401.00px;transform-origin:0 0;font-size:12px;line-height:12px;transform:scaleX(0.9897);word-spacing:1.50px;">Text Document</div>
<div class="t" style="left:349.00px;top:401.00px;transform-origin:0 0;font-size:12px;line-height:12px;transform:scaleX(0.9363);width:31.0px;overflow:hidden;">7/27/2016</div>
<div class="a" style="left:6px;top:416px;width:145px;height:19px;background:#f0f0f0;box-sizing:border-box;border:1px solid #dadada;"></div>
<svg class="a" style="left:4.5px;top:416.5px;" width="17" height="17" viewBox="0 0 17 17"><defs><linearGradient id="dcg" x1="0" y1="0" x2="1" y2="1"><stop offset="0" stop-color="#ffffff"/><stop offset="1" stop-color="#e4e4e4"/></linearGradient></defs><path d="M3.5 1H10.5L13.5 4V16H3.5Z" fill="url(#dcg)" stroke="#8a8a8a" stroke-width="0.9"/><path d="M10.5 1V4H13.5" fill="#f0f0f0" stroke="#9a9a9a" stroke-width="0.8"/></svg>
<div class="t" style="left:24.50px;top:420.00px;transform-origin:0 0;font-size:12px;line-height:12px;transform:scaleX(0.9471);word-spacing:1.50px;">%5Csrviwf$IWTM AR...</div>
<div class="t" style="left:148.30px;top:420.00px;width:66.22px;text-align:right;transform-origin:100% 0;font-size:12px;line-height:12px;transform:scaleX(0.8505);word-spacing:1.50px;">207,432 KB</div>
<div class="t" style="left:228.40px;top:420.00px;transform-origin:0 0;font-size:12px;line-height:12px;transform:scaleX(0.8696);">File</div>
<div class="t" style="left:349.00px;top:420.00px;transform-origin:0 0;font-size:12px;line-height:12px;transform:scaleX(0.9363);width:31.0px;overflow:hidden;">7/20/2016</div>
<div class="a" style="left:1px;top:923px;width:378px;height:17px;background:#fff;"></div>
<div class="a" style="left:1px;top:923px;width:378px;height:1px;background:#d4d4d4;"></div>
<div class="a" style="left:1px;top:923px;width:18px;height:17px;background:#fff;box-sizing:border-box;border:1px solid #dcdcdc;"></div>
<div class="a" style="left:361px;top:923px;width:17px;height:17px;background:#fff;box-sizing:border-box;border:1px solid #dcdcdc;"></div>
<div class="a" style="left:19px;top:923px;width:262px;height:17px;background:#dadada;box-sizing:border-box;border:1px solid #c8c8c8;"></div>
<svg class="a" style="left:8px;top:927px;" width="6" height="9" viewBox="0 0 6 9"><path d="M5 0.5L1 4.5L5 8.5" fill="none" stroke="#555" stroke-width="1.2"/></svg>
<svg class="a" style="left:366px;top:927px;" width="6" height="9" viewBox="0 0 6 9"><path d="M1 0.5L5 4.5L1 8.5" fill="none" stroke="#555" stroke-width="1.2"/></svg>
<svg class="a" style="left:146px;top:928px;" width="8" height="7" viewBox="0 0 8 7"><path d="M1 0V7M4 0V7M7 0V7" stroke="#555" stroke-width="1.6"/></svg>
<div class="a" style="left:385px;top:224px;width:895px;height:449px;background:#fff;box-sizing:border-box;border:1px solid #828790;"></div>
<svg class="a" style="left:395px;top:232px;" width="7" height="7" viewBox="0 0 7 7"><path d="M6.5 0.5V6.5H0.5Z" fill="#595959"/></svg>
<div class="a" style="left:406px;top:236px;width:1px;height:1px;background:#555;"></div>
<div class="a" style="left:408px;top:236px;width:1px;height:1px;background:#555;"></div>
<div class="a" style="left:417px;top:244px;width:1px;height:1px;background:#555;"></div>
<svg class="a" style="left:410px;top:227px;" width="13" height="16" viewBox="0 0 13 16"><defs><linearGradient id="w8b" x1="0" y1="0" x2="0" y2="1"><stop offset="0" stop-color="#f9f0b0"/><stop offset="1" stop-color="#e2b848"/></linearGradient><linearGradient id="w8f" x1="0" y1="0" x2="1" y2="1"><stop offset="0" stop-color="#fdf8c8"/><stop offset="1" stop-color="#e8cc60"/></linearGradient></defs><path d="M1.5 0.5H11Q12 0.5 12 1.5V6H12.5V15H1.5Z" fill="url(#w8b)" stroke="#dcc060" stroke-width="0.8"/><path d="M0.5 1Q0.5 0.5 1.5 0.5H6.5V15.5Q5 16 4 15.5H1Q0.5 15.5 0.5 15Z" fill="url(#w8f)" stroke="#dcc060" stroke-width="0.8"/><rect x="6.5" y="1" width="1.5" height="14.5" fill="#d6b248" opacity="0.8"/><path d="M3.5 1.5L5 3V9H4Z" fill="#fff" opacity="0.85"/><rect x="11" y="7.5" width="1.1" height="2.5" fill="#e8eef5"/><rect x="11" y="10" width="1.1" height="3.5" fill="#2f9ae8"/></svg>
<div class="t" style="left:429.80px;top:228.80px;transform-origin:0 0;font-size:12px;line-height:12px;transform:scaleX(1.0551);word-spacing:1.50px;">/ &lt;root&gt;</div>
<svg class="a" style="left:415px;top:250px;" width="7" height="7" viewBox="0 0 7 7"><path d="M6.5 0.5V6.5H0.5Z" fill="#595959"/></svg>
<div class="a" style="left:425px;top:254px;width:1px;height:1px;background:#555;"></div>
<div class="a" style="left:427px;top:254px;width:1px;height:1px;background:#555;"></div>
<svg class="a" style="left:429px;top:245px;" width="13" height="16" viewBox="0 0 13 16"><defs><linearGradient id="w8b" x1="0" y1="0" x2="0" y2="1"><stop offset="0" stop-color="#f9f0b0"/><stop offset="1" stop-color="#e2b848"/></linearGradient><linearGradient id="w8f" x1="0" y1="0" x2="1" y2="1"><stop offset="0" stop-color="#fdf8c8"/><stop offset="1" stop-color="#e8cc60"/></linearGradient></defs><path d="M1.5 0.5H11Q12 0.5 12 1.5V6H12.5V15H1.5Z" fill="url(#w8b)" stroke="#dcc060" stroke-width="0.8"/><path d="M0.5 1Q0.5 0.5 1.5 0.5H6.5V15.5Q5 16 4 15.5H1Q0.5 15.5 0.5 15Z" fill="url(#w8f)" stroke="#dcc060" stroke-width="0.8"/><rect x="6.5" y="1" width="1.5" height="14.5" fill="#d6b248" opacity="0.8"/><path d="M3.5 1.5L5 3V9H4Z" fill="#fff" opacity="0.85"/><rect x="11" y="7.5" width="1.1" height="2.5" fill="#e8eef5"/><rect x="11" y="10" width="1.1" height="3.5" fill="#2f9ae8"/></svg>
<div class="t" style="left:450.00px;top:246.90px;transform-origin:0 0;font-size:12px;line-height:12px;transform:scaleX(0.9481);">u02</div>
<svg class="a" style="left:434px;top:261px;" width="14" height="13" viewBox="0 0 14 13"><path d="M1.5 0V11.5H14" fill="none" stroke="#777" stroke-width="1" stroke-dasharray="1 1"/></svg>
<div class="a" style="left:445px;top:262px;width:50px;height:18px;background:#f0f0f0;box-sizing:border-box;border:1px solid #dadada;"></div>
<svg class="a" style="left:448px;top:263px;" width="13" height="16" viewBox="0 0 13 16"><defs><linearGradient id="w8b" x1="0" y1="0" x2="0" y2="1"><stop offset="0" stop-color="#f9f0b0"/><stop offset="1" stop-color="#e2b848"/></linearGradient><linearGradient id="w8f" x1="0" y1="0" x2="1" y2="1"><stop offset="0" stop-color="#fdf8c8"/><stop offset="1" stop-color="#e8cc60"/></linearGradient></defs><path d="M1.5 0.5H11Q12 0.5 12 1.5V6H12.5V15H1.5Z" fill="url(#w8b)" stroke="#dcc060" stroke-width="0.8"/><path d="M0.5 1Q0.5 0.5 1.5 0.5H6.5V15.5Q5 16 4 15.5H1Q0.5 15.5 0.5 15Z" fill="url(#w8f)" stroke="#dcc060" stroke-width="0.8"/><rect x="6.5" y="1" width="1.5" height="14.5" fill="#d6b248" opacity="0.8"/><path d="M3.5 1.5L5 3V9H4Z" fill="#fff" opacity="0.85"/><rect x="11" y="7.5" width="1.1" height="2.5" fill="#e8eef5"/><rect x="11" y="10" width="1.1" height="3.5" fill="#2f9ae8"/></svg>
<div class="t" style="left:468.60px;top:264.90px;transform-origin:0 0;font-size:12px;line-height:12px;transform:scaleX(0.9640);">arch</div>
<div class="a" style="left:385px;top:676px;width:895px;height:265px;background:#fff;box-sizing:border-box;border:1px solid #828790;"></div>
<div class="a" style="left:386px;top:677px;width:893px;height:19px;background:#fafafa;"></div>
<div class="a" style="left:386px;top:696px;width:893px;height:1px;background:#e5e5e5;"></div>
<div class="a" style="left:387px;top:678px;width:211px;height:18px;box-sizing:border-box;border:1px solid #e8e8e8;"></div>
<div class="a" style="left:599px;top:678px;width:112px;height:18px;box-sizing:border-box;border:1px solid #e8e8e8;"></div>
<div class="a" style="left:712px;top:678px;width:149px;height:18px;box-sizing:border-box;border:1px solid #e8e8e8;"></div>
<div class="a" style="left:862px;top:678px;width:78px;height:18px;box-sizing:border-box;border:1px solid #e8e8e8;"></div>
<div class="a" style="left:941px;top:678px;width:60px;height:18px;box-sizing:border-box;border:1px solid #e8e8e8;"></div>
<div class="a" style="left:1002px;top:678px;width:277px;height:18px;box-sizing:border-box;border:1px solid #e8e8e8;"></div>
<div class="a" style="left:598px;top:677px;width:1px;height:19px;background:#e0e0e0;"></div>
<div class="a" style="left:711px;top:677px;width:1px;height:19px;background:#e0e0e0;"></div>
<div class="a" style="left:861px;top:677px;width:1px;height:19px;background:#e0e0e0;"></div>
<div class="a" style="left:940px;top:677px;width:1px;height:19px;background:#e0e0e0;"></div>
<div class="a" style="left:1001px;top:677px;width:1px;height:19px;background:#e0e0e0;"></div>
<div class="t" style="left:393.30px;top:682.00px;transform-origin:0 0;font-size:12px;line-height:12px;transform:scaleX(0.9519);">Name</div>
<svg class="a" style="left:487px;top:681px;" width="8" height="4" viewBox="0 0 8 4"><path d="M0 4H8L4 0Z" fill="#000"/></svg>
<div class="t" style="left:679.26px;top:682.00px;width:25.34px;text-align:right;transform-origin:100% 0;font-size:12px;line-height:12px;transform:scaleX(0.8783);">Size</div>
<div class="t" style="left:717.30px;top:682.00px;transform-origin:0 0;font-size:12px;line-height:12px;transform:scaleX(0.9442);">Changed</div>
<div class="t" style="left:867.30px;top:682.00px;transform-origin:0 0;font-size:12px;line-height:12px;transform:scaleX(0.9700);">Rights</div>
<div class="t" style="left:946.50px;top:682.00px;transform-origin:0 0;font-size:12px;line-height:12px;transform:scaleX(0.9904);">Owner</div>
<svg class="a" style="left:392px;top:698px;" width="13" height="16" viewBox="0 0 13 16"><defs><linearGradient id="w8b" x1="0" y1="0" x2="0" y2="1"><stop offset="0" stop-color="#f9f0b0"/><stop offset="1" stop-color="#e2b848"/></linearGradient><linearGradient id="w8f" x1="0" y1="0" x2="1" y2="1"><stop offset="0" stop-color="#fdf8c8"/><stop offset="1" stop-color="#e8cc60"/></linearGradient></defs><path d="M1.5 0.5H11Q12 0.5 12 1.5V6H12.5V15H1.5Z" fill="url(#w8b)" stroke="#dcc060" stroke-width="0.8"/><path d="M0.5 1Q0.5 0.5 1.5 0.5H6.5V15.5Q5 16 4 15.5H1Q0.5 15.5 0.5 15Z" fill="url(#w8f)" stroke="#dcc060" stroke-width="0.8"/><rect x="6.5" y="1" width="1.5" height="14.5" fill="#d6b248" opacity="0.8"/><path d="M3.5 1.5L5 3V9H4Z" fill="#fff" opacity="0.85"/><rect x="11" y="7.5" width="1.1" height="2.5" fill="#e8eef5"/><rect x="11" y="10" width="1.1" height="3.5" fill="#2f9ae8"/><path d="M2.2 9L4.6 6.4L7 9Z" fill="#1a1a1a"/><path d="M4.6 8.5V12.3H10.5" fill="none" stroke="#1a1a1a" stroke-width="1.2"/></svg>
<div class="t" style="left:409.00px;top:701.00px;transform-origin:0 0;font-size:12px;line-height:12px;">..</div>
<div class="t" style="left:717.30px;top:701.00px;transform-origin:0 0;font-size:12px;line-height:12px;transform:scaleX(0.9347);word-spacing:1.50px;">12/9/2015 11:35:15 AM</div>
<div class="t" style="left:867.00px;top:701.00px;transform-origin:0 0;font-size:12px;line-height:12px;transform:scaleX(0.9867);">rwxr-xr-x</div>
<div class="t" style="left:946.50px;top:701.00px;transform-origin:0 0;font-size:12px;line-height:12px;transform:scaleX(1.0628);">root</div>
<div class="a" style="left:391px;top:716px;width:206px;height:19px;background:#c8e0f8;box-sizing:border-box;border:1px solid #7fa8dc;"></div>
<div class="a" style="left:408px;top:717px;width:164px;height:17px;box-sizing:border-box;border:1px dotted #000;"></div>
<div class="t" style="left:409.00px;top:719.80px;transform-origin:0 0;font-size:12px;line-height:12px;transform:scaleX(0.9743);word-spacing:1.50px;">\srviwf$IWTM ARCHIVE DATA</div>
<div class="t" style="left:638.40px;top:719.80px;width:66.22px;text-align:right;transform-origin:100% 0;font-size:12px;line-height:12px;transform:scaleX(0.8567);word-spacing:1.50px;">207,432 KB</div>
<div class="t" style="left:717.30px;top:719.80px;transform-origin:0 0;font-size:12px;line-height:12px;transform:scaleX(0.9218);word-spacing:1.50px;">7/20/2016 2:53:29 AM</div>
<div class="t" style="left:867.00px;top:719.80px;transform-origin:0 0;font-size:12px;line-height:12px;transform:scaleX(0.9646);">rwxrwxrwx</div>
<div class="t" style="left:946.50px;top:719.80px;transform-origin:0 0;font-size:12px;line-height:12px;transform:scaleX(0.9480);">oracle</div>
<div class="t" style="left:2.00px;top:948.00px;transform-origin:0 0;font-size:12px;line-height:12px;transform:scaleX(0.8867);word-spacing:1.50px;">203 MB of 230 MB in 1 of 9</div>
<div class="t" style="left:297.80px;top:948.00px;transform-origin:0 0;font-size:12px;line-height:12px;transform:scaleX(0.9364);word-spacing:1.50px;">5 hidden</div>
<div class="t" style="left:386.90px;top:947.00px;transform-origin:0 0;font-size:12px;line-height:12px;transform:scaleX(0.8892);word-spacing:1.50px;">203 MB of 203 MB in 1 of 1</div>
<div class="a" style="left:0px;top:964px;width:1280px;height:1px;background:#e3e3e3;"></div>
<div class="a" style="left:0px;top:964px;width:1058px;height:20px;box-sizing:border-box;border:1px solid #dcdcdc;border-bottom:none;"></div>
<div class="a" style="left:1060px;top:964px;width:33px;height:20px;box-sizing:border-box;border:1px solid #dcdcdc;border-bottom:none;"></div>
<div class="a" style="left:1095px;top:964px;width:68px;height:20px;box-sizing:border-box;border:1px solid #dcdcdc;border-bottom:none;"></div>
<div class="a" style="left:1165px;top:964px;width:33px;height:20px;box-sizing:border-box;border:1px solid #dcdcdc;border-bottom:none;"></div>
<div class="a" style="left:1200px;top:964px;width:80px;height:20px;box-sizing:border-box;border:1px solid #dcdcdc;border-bottom:none;"></div>
<svg class="a" style="left:1068px;top:966px;" width="15" height="16" viewBox="0 0 15 16"><path d="M3 7V5A4.5 4.5 0 0 1 12 5V7" fill="none" stroke="#b8880a" stroke-width="2"/><rect x="1" y="7" width="13" height="9" rx="1" fill="#f2c52a" stroke="#b8880a"/><path d="M2 10H13M2 12.5H13" stroke="#d9a515" stroke-width="0.8"/><rect x="7" y="10" width="1.2" height="3" fill="#333"/></svg>
<div class="t" style="left:1118.40px;top:967.50px;transform-origin:0 0;font-size:12px;line-height:12px;transform:scaleX(0.8110);">SCP</div>
<svg class="a" style="left:1172px;top:966px;" width="17" height="16" viewBox="0 0 17 16"><rect x="0.5" y="3.5" width="10" height="8" fill="#d8d8d8" stroke="#aaa"/><rect x="7.5" y="1.5" width="5" height="11" fill="#e0e0e0" stroke="#aaa"/><path d="M10 12V15M6 15H15" stroke="#aaa" stroke-width="1.5"/></svg>
<div class="t" style="left:1221.80px;top:967.90px;transform-origin:0 0;font-size:12px;line-height:12px;transform:scaleX(0.8621);">0:06:23</div>
<div class="a" style="left:0px;top:984px;width:1280px;height:40px;background:#69c9ea;"></div>
<div class="a" style="left:0px;top:984px;width:1280px;height:1px;background:#3a4a52;"></div>
<div class="a" style="left:0px;top:1023px;width:1280px;height:1px;background:#3a4a52;"></div>
<div class="a" style="left:0px;top:984px;width:1px;height:40px;background:#3a4a52;"></div>
<div class="a" style="left:1279px;top:984px;width:1px;height:40px;background:#3a4a52;"></div>
<div class="a" style="left:237px;top:985px;width:60px;height:38px;background:#74cfec;"></div>
<div class="a" style="left:237px;top:985px;width:1px;height:38px;background:#2e4650;"></div>
<div class="a" style="left:296px;top:985px;width:1px;height:38px;background:#2e4650;"></div>
<div class="a" style="left:299px;top:985px;width:60px;height:38px;background:#74cfec;"></div>
<div class="a" style="left:299px;top:985px;width:1px;height:38px;background:#2e4650;"></div>
<div class="a" style="left:358px;top:985px;width:1px;height:38px;background:#2e4650;"></div>
<div class="a" style="left:361px;top:985px;width:60px;height:38px;background:#74cfec;"></div>
<div class="a" style="left:361px;top:985px;width:1px;height:38px;background:#2e4650;"></div>
<div class="a" style="left:420px;top:985px;width:1px;height:38px;background:#2e4650;"></div>
<div class="a" style="left:423px;top:985px;width:60px;height:38px;background:#74cfec;"></div>
<div class="a" style="left:423px;top:985px;width:1px;height:38px;background:#2e4650;"></div>
<div class="a" style="left:482px;top:985px;width:1px;height:38px;background:#2e4650;"></div>
<div class="a" style="left:485px;top:985px;width:60px;height:38px;background:#74cfec;"></div>
<div class="a" style="left:485px;top:985px;width:1px;height:38px;background:#2e4650;"></div>
<div class="a" style="left:544px;top:985px;width:1px;height:38px;background:#2e4650;"></div>
<div class="a" style="left:547px;top:985px;width:60px;height:38px;background:#74cfec;"></div>
<div class="a" style="left:547px;top:985px;width:1px;height:38px;background:#2e4650;"></div>
<div class="a" style="left:606px;top:985px;width:1px;height:38px;background:#2e4650;"></div>
<div class="a" style="left:609px;top:985px;width:55px;height:38px;background:#74cfec;"></div>
<div class="a" style="left:609px;top:985px;width:1px;height:38px;background:#2e4650;"></div>
<div class="a" style="left:663px;top:985px;width:1px;height:38px;background:#2e4650;"></div>
<div class="a" style="left:671px;top:985px;width:60px;height:38px;background:#a6dff3;"></div>
<div class="a" style="left:671px;top:985px;width:1px;height:38px;background:#2e4650;"></div>
<div class="a" style="left:730px;top:985px;width:1px;height:38px;background:#2e4650;"></div>
<div class="a" style="left:733px;top:985px;width:55px;height:38px;background:#74cfec;"></div>
<div class="a" style="left:733px;top:985px;width:1px;height:38px;background:#2e4650;"></div>
<div class="a" style="left:787px;top:985px;width:1px;height:38px;background:#2e4650;"></div>
<div class="a" style="left:795px;top:985px;width:60px;height:38px;background:#74cfec;"></div>
<div class="a" style="left:795px;top:985px;width:1px;height:38px;background:#2e4650;"></div>
<div class="a" style="left:854px;top:985px;width:1px;height:38px;background:#2e4650;"></div>
<div class="a" style="left:668px;top:985px;width:1px;height:38px;background:#2e4650;"></div>
<div class="a" style="left:791px;top:985px;width:1px;height:38px;background:#2e4650;"></div>
<svg class="a" style="left:11px;top:990px;" width="28" height="27" viewBox="0 0 28 27"><path d="M0.5 3.5L11.5 1.6V12.3H0.5ZM13.3 1.3L27.5 -0.6V12.3H13.3ZM0.5 14.1H11.5V24.6L0.5 22.8ZM13.3 14.1H27.5V26.5L13.3 24.9Z" fill="#fff"/></svg>
<svg class="a" style="left:65px;top:987px;" width="33" height="33" viewBox="0 0 33 33"><rect x="0.5" y="0.5" width="15.5" height="29" rx="1" fill="#1e88d8" stroke="#fff" stroke-width="1.2"/><rect x="1" y="7.5" width="14.5" height="1.4" fill="#fff"/><rect x="13" y="15.5" width="9" height="4" rx="1.5" fill="#7a93a5" stroke="#fff"/><rect x="5.5" y="18.5" width="26.5" height="13.5" rx="2" fill="#7594a8" stroke="#fff" stroke-width="1.2"/><path d="M8 23.5H29" stroke="#fff" stroke-width="1"/><circle cx="11.5" cy="23.5" r="1.3" fill="#fff"/><circle cx="25.5" cy="23.5" r="1.3" fill="#fff"/></svg>
<svg class="a" style="left:129px;top:992px;" width="28" height="24" viewBox="0 0 28 24"><defs><linearGradient id="psg" x1="0" y1="0" x2="0" y2="1"><stop offset="0" stop-color="#8fc3ee"/><stop offset="0.45" stop-color="#2f7fce"/><stop offset="1" stop-color="#1f5fa8"/></linearGradient></defs><path d="M6 1H26Q27.5 1 27 2.5L22 21Q21.5 22.5 20 22.5H1.5Q0 22.5 0.5 21L4.5 2.5Q5 1 6 1Z" fill="url(#psg)" stroke="#1a4f8f" stroke-width="0.8"/><path d="M8.5 4.5L15.5 11L6.5 17.5" fill="none" stroke="#fff" stroke-width="1.8"/><path d="M13 17.5H18.5" stroke="#cfe4f7" stroke-width="1.5"/></svg>
<svg class="a" style="left:188.5px;top:989px;" width="33" height="31" viewBox="0 0 33 31"><defs><linearGradient id="exf" x1="0" y1="0" x2="0" y2="1"><stop offset="0" stop-color="#fff8c8"/><stop offset="1" stop-color="#f0d070"/></linearGradient><linearGradient id="exb" x1="0" y1="0" x2="0" y2="1"><stop offset="0" stop-color="#e8f8ff"/><stop offset="1" stop-color="#58b8e8"/></linearGradient></defs><path d="M2.5 3Q2.5 1.5 4 1.5H14Q15.5 1.5 15.5 3V6H2.5Z" fill="#f4dc90" stroke="#c8a040" stroke-width="0.9"/><rect x="4.5" y="2.2" width="3" height="2" fill="#10b010"/><rect x="7.5" y="2.5" width="6" height="1.5" fill="#fff"/><path d="M10.5 5Q10.5 3.5 12 3.5H22Q23.5 3.5 23.5 5V8H10.5Z" fill="#f4dc90" stroke="#c8a040" stroke-width="0.9"/><rect x="12.5" y="4.2" width="3" height="2" fill="#d82020"/><rect x="15.5" y="4.5" width="6" height="1.5" fill="#fff"/><path d="M17.5 7Q17.5 5.5 19 5.5H30Q31.5 5.5 31.5 7V10H17.5Z" fill="#f4dc90" stroke="#c8a040" stroke-width="0.9"/><rect x="19.5" y="6.2" width="3" height="2" fill="#1a8ae8"/><rect x="22.5" y="6.5" width="7" height="1.5" fill="#fff"/><path d="M0.5 9.5Q0.5 8 2 8H31Q32.5 8 32.5 9.5V27.5Q32.5 29 31 29H2Q0.5 29 0.5 27.5Z" fill="url(#exf)" stroke="#c8a040" stroke-width="1"/><path d="M4.5 18.5Q4.5 16.5 6.5 16.5H26.5Q28.5 16.5 28.5 18.5V30.5H22.5V23H10.5V30.5H4.5Z" fill="url(#exb)" stroke="#3a9ad8" stroke-width="0.9"/><path d="M7 12L8 19M3 17L12 15" stroke="#fff" stroke-width="0.7" opacity="0.8"/></svg>
<svg class="a" style="left:251px;top:989px;" width="32" height="30" viewBox="0 0 32 30"><defs><linearGradient id="arg" x1="0" y1="0" x2="0" y2="1"><stop offset="0" stop-color="#a8d46a"/><stop offset="1" stop-color="#4f8a22"/></linearGradient><linearGradient id="shg" x1="0" y1="0" x2="0" y2="1"><stop offset="0" stop-color="#fff2b8"/><stop offset="1" stop-color="#e89a2a"/></linearGradient></defs><path d="M2 7H22V0L31 10L22 20V13H2Z" fill="url(#arg)" stroke="#4a7a25" stroke-width="0.6"/><path d="M9.5 8.5L18.5 11.5V19C18.5 24.5 14 27.5 9.5 29.5C5 27.5 0.5 24.5 0.5 19V11.5Z" fill="url(#shg)" stroke="#b0651e" stroke-width="0.9"/><path d="M9.5 12L15.5 14V19C15.5 23 12.5 25 9.5 26.5C6.5 25 3.5 23 3.5 19V14Z" fill="none" stroke="#c97a25" stroke-width="0.9"/><path d="M9.5 15.5L10.6 18H13L11.1 19.5L11.8 22L9.5 20.5L7.2 22L7.9 19.5L6 18H8.4Z" fill="#e8a02a"/></svg>
<svg class="a" style="left:314px;top:989px;" width="30" height="30" viewBox="0 0 30 30"><circle cx="15" cy="15" r="14.5" fill="#1da261"/><path d="M15 0.5A14.5 14.5 0 0 1 27.56 7.75H15A7.25 7.25 0 0 0 8.72 11.38L2.44 7.75A14.5 14.5 0 0 1 15 0.5Z" fill="#db4437"/><path d="M27.56 7.75A14.5 14.5 0 0 1 15 29.5L21.28 18.63A7.25 7.25 0 0 0 21.28 11.38Z" fill="#fcc934"/><circle cx="15" cy="15" r="6.8" fill="#fff"/><circle cx="15" cy="15" r="5.4" fill="#4285f4"/></svg>
<svg class="a" style="left:377px;top:988px;" width="24" height="32" viewBox="0 0 24 32"><path d="M3.5 1.5L19 0.5Q20.5 0.5 20.5 2V30Q20.5 31.5 19 31L3.5 28.5Z" fill="#b4c2d8" stroke="#59698a" stroke-width="0.9"/><path d="M5 3L18.5 2.2V29L5 27Z" fill="#dde5f0"/><path d="M6 8H17M6 11H17M6 14H17M6 17H17M6 20H17M6 23H17" stroke="#b8c8dc" stroke-width="0.7"/><path d="M4 4H1.5M4 7H1.5M4 10H1.5M4 13H1.5M4 16H1.5M4 19H1.5M4 22H1.5M4 25H1.5" stroke="#555" stroke-width="1.3"/><path d="M12.5 7L17 14.5H8Z" fill="#f5d020" stroke="#555" stroke-width="0.6"/><rect x="12" y="9.5" width="1" height="3" fill="#222"/><circle cx="12" cy="21" r="3.8" fill="#d82020"/><path d="M10.3 19.3L13.7 22.7M13.7 19.3L10.3 22.7" stroke="#fff" stroke-width="1.1"/></svg>
<svg class="a" style="left:439px;top:988px;" width="27" height="31" viewBox="0 0 27 31"><defs><linearGradient id="tvg" x1="0" y1="0" x2="1" y2="1"><stop offset="0" stop-color="#3fa9f5"/><stop offset="1" stop-color="#0a5cc8"/></linearGradient></defs><path d="M1 3Q1 0.5 3.5 1L23.5 4Q26 4.5 26 7V27Q26 30 23.5 29.5L3.5 27Q1 26.5 1 24Z" fill="url(#tvg)"/><ellipse cx="12.5" cy="15" rx="9.5" ry="10" fill="#fff"/><ellipse cx="12.5" cy="15" rx="8" ry="8.5" fill="#e6eef7"/><path d="M4.5 15L9 10.5V13.3H16V10.5L20.5 15L16 19.5V16.7H9V19.5Z" fill="#1a7fe0"/></svg>
<svg class="a" style="left:500px;top:988px;" width="30" height="31" viewBox="0 0 30 31"><rect x="5.5" y="1.5" width="12" height="11" fill="#c4d4e6" stroke="#7a8ea8"/><rect x="2.5" y="6.5" width="13" height="11" fill="#a9ccec" stroke="#5a7aa0"/><rect x="0.5" y="10.5" width="14" height="11" fill="#cfe4f7" stroke="#5a7aa0"/><rect x="4" y="22" width="8" height="2" fill="#9aa8b8"/><circle cx="20" cy="11" r="7.5" fill="#d8ecfa" fill-opacity="0.85" stroke="#9ab0c8" stroke-width="2.2"/><path d="M22.5 18.5L26 29" stroke="#2a9a3a" stroke-width="3"/></svg>
<svg class="a" style="left:561px;top:991px;" width="30" height="25" viewBox="0 0 30 25"><rect x="0.5" y="0.5" width="29" height="24" fill="#000" stroke="#9a9a9a"/><rect x="1" y="1" width="28" height="2.5" fill="#c8c8c8"/><text x="3" y="12" font-family="Liberation Mono" font-size="8.5" font-weight="bold" fill="#fff">C:\</text><rect x="18" y="10.5" width="8" height="1.5" fill="#fff"/></svg>
<svg class="a" style="left:620px;top:987px;" width="32" height="33" viewBox="0 0 32 33"><rect x="14.5" y="1" width="13" height="12" fill="#1428c8" stroke="#e8e8e8" stroke-width="2"/><path d="M11 15H31L29.5 18H12Z" fill="#e0e0e0" stroke="#333" stroke-width="0.8"/><rect x="4.5" y="14.5" width="13" height="12" fill="#1428c8" stroke="#e8e8e8" stroke-width="2"/><path d="M1 28.5H21L19.5 31.5H2Z" fill="#e0e0e0" stroke="#333" stroke-width="0.8"/><path d="M25 4L9 16.5H15L6 27L22.5 14H16.5Z" fill="#f8ec20" stroke="#4a4a00" stroke-width="0.6" stroke-linejoin="round"/></svg>
<svg class="a" style="left:685px;top:988px;" width="32" height="31" viewBox="0 0 32 31"><defs><linearGradient id="lkg" x1="0" y1="0" x2="1" y2="0"><stop offset="0" stop-color="#3a3a3a"/><stop offset="0.5" stop-color="#9a9a9a"/><stop offset="1" stop-color="#3a3a3a"/></linearGradient></defs><path d="M0 0H9L6.5 2.5L10 6L7 9L3.5 5.5L1 8Z" fill="#2f7fe8"/><path d="M10.5 13V8.5A6 6 0 0 1 22.5 8.5V13" fill="none" stroke="#7a7a7a" stroke-width="3.2"/><rect x="7.5" y="12.5" width="19" height="14" rx="1.5" fill="url(#lkg)" stroke="#2a2a2a" stroke-width="0.8"/><path d="M31 30H21L23.8 27.2L20 23.5L23.5 20L27.2 23.8L30 21Z" fill="#1fc21f"/></svg>
<svg class="a" style="left:744px;top:987px;" width="32" height="32" viewBox="0 0 32 32"><defs><linearGradient id="ieg" x1="0" y1="0" x2="0" y2="1"><stop offset="0" stop-color="#8fe0fa"/><stop offset="1" stop-color="#1a8fd8"/></linearGradient></defs><path d="M27 17H10.5A6 5.5 0 0 0 22 20.5H26.5A11 10.5 0 1 1 27 15.5ZM10.6 13.2H21.5A5.5 5 0 0 0 10.6 13.2Z" fill="url(#ieg)" stroke="#1a7fc8" stroke-width="0.8" fill-rule="evenodd"/><path d="M4 29C-2 24 6 9 18 4C26 1 32 1 30 7" fill="none" stroke="#f5c21a" stroke-width="2.2"/></svg>
<svg class="a" style="left:809px;top:988px;" width="32" height="32" viewBox="0 0 32 32"><path d="M2 19C0 11 10 5 19 8C24 10 23 14 19.5 14.5C16.5 15 17 19 20 20C23 22 17 28 11 27.5C6 27 3 23 2 19Z" fill="#e8f0f8" stroke="#9ab0c8" stroke-width="1"/><circle cx="6" cy="17" r="2.3" fill="#e03a3a"/><circle cx="10" cy="12" r="2.3" fill="#5ac03a"/><circle cx="16" cy="10" r="2.3" fill="#f5a820"/><circle cx="13" cy="20" r="2.3" fill="#5aa0e0"/><path d="M16 30L28 8" stroke="#e0901a" stroke-width="2.2"/><path d="M25.5 10L27 3L31 0.5L30 5.5L28.5 11Z" fill="#d8a878" stroke="#8a5a2a" stroke-width="0.7"/></svg>
<svg class="a" style="left:1110px;top:1002px;" width="8" height="5" viewBox="0 0 8 5"><path d="M0 4.5H8L4 0.5Z" fill="#000"/></svg>
<svg class="a" style="left:1130px;top:996px;" width="17" height="16" viewBox="0 0 17 16"><path d="M1.2 0.3V15.7" stroke="#1e3e4a" stroke-width="2.6" stroke-linecap="round"/><path d="M1.2 0.3V15.7" stroke="#fff" stroke-width="1.1" stroke-linecap="round"/><path d="M2.3 1H8.5Q10 1.5 10.5 3.5H14L13 5L14 6.5H10.5Q9 8 8 7.5H2.3Z" fill="#fafafa" stroke="#1e3e4a" stroke-width="0.9"/><circle cx="11.5" cy="11.2" r="4.3" fill="#e02020" stroke="#b01010" stroke-width="0.5"/><path d="M9.6 9.3L13.4 13.1M13.4 9.3L9.6 13.1" stroke="#fff" stroke-width="1.4"/></svg>
<svg class="a" style="left:1154px;top:996px;" width="17" height="16" viewBox="0 0 17 16"><g stroke="#1e3e4a" stroke-width="2.4" fill="none"><rect x="1" y="1" width="4.5" height="6" rx="2"/><path d="M3.2 7V15"/><rect x="6.5" y="2.5" width="9.5" height="8"/><path d="M11.2 10.5V13.5M8.5 14H14"/></g><g stroke="#fff" stroke-width="1" fill="none"><rect x="1" y="1" width="4.5" height="6" rx="2"/><path d="M3.2 7V15"/><rect x="6.5" y="2.5" width="9.5" height="8"/><path d="M11.2 10.5V13.5M8.5 14H14"/></g></svg>
<svg class="a" style="left:1178.5px;top:996px;" width="17" height="16" viewBox="0 0 17 16"><path d="M0.8 5H3.2L7 0.8V15.2L3.2 11H0.8Z" fill="#fff" stroke="#1e3e4a" stroke-width="0.9" stroke-linejoin="round"/><path d="M3.2 5V11" stroke="#1e3e4a" stroke-width="0.8"/><circle cx="10.5" cy="11.2" r="4.3" fill="#e02020" stroke="#b01010" stroke-width="0.5"/><path d="M8.6 9.3L12.4 13.1M12.4 9.3L8.6 13.1" stroke="#fff" stroke-width="1.4"/></svg>
<div class="t" style="left:1216.00px;top:990.00px;transform-origin:0 0;font-size:12px;line-height:12px;transform:scaleX(0.9026);word-spacing:1.50px;">1:24 PM</div>
<div class="t" style="left:1211.70px;top:1006.40px;transform-origin:0 0;font-size:12px;line-height:12px;transform:scaleX(0.9607);">7/27/2016</div>
</body></html>
